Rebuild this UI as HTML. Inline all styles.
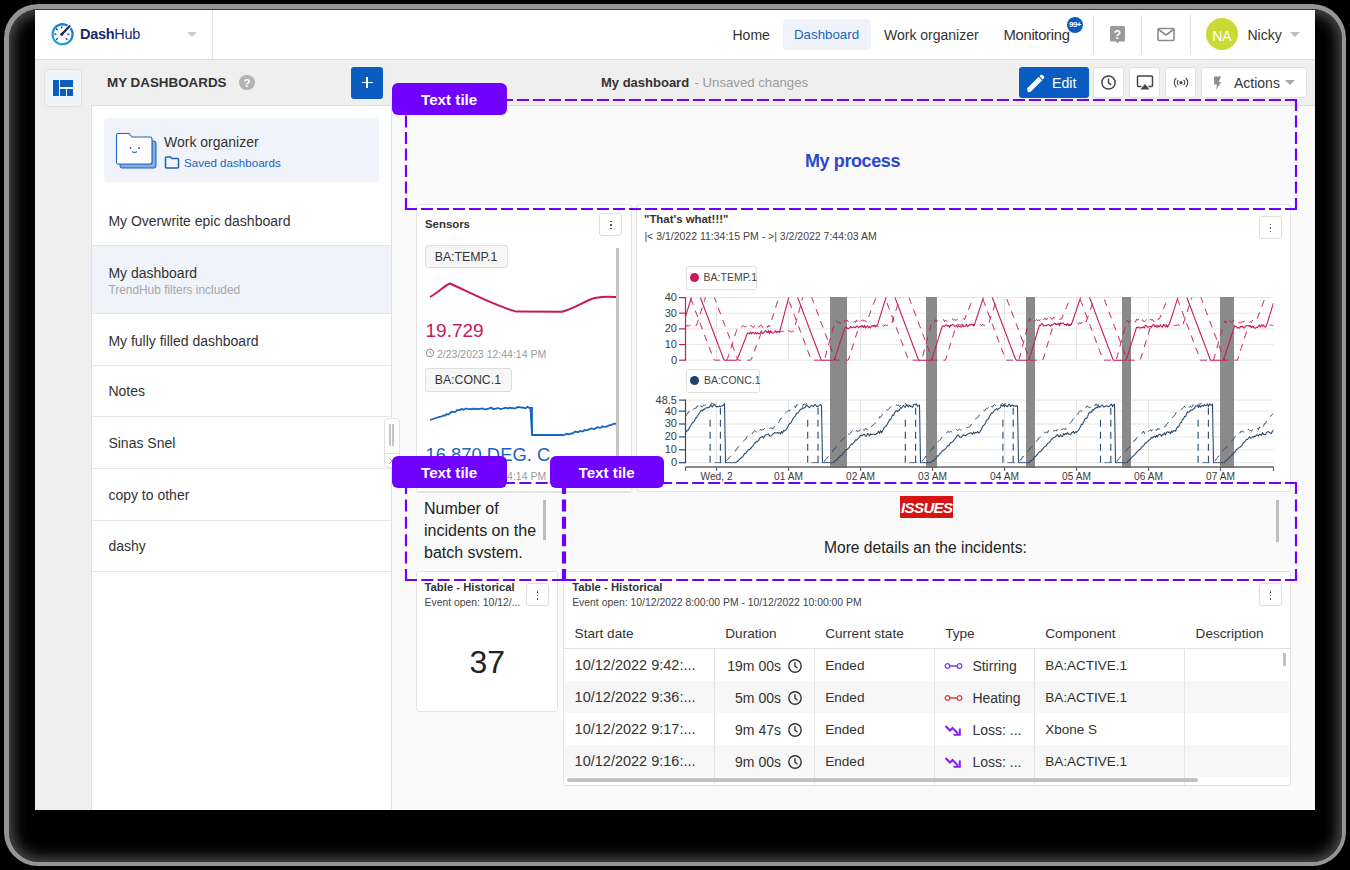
<!DOCTYPE html>
<html><head><meta charset="utf-8">
<style>
*{box-sizing:border-box;margin:0;padding:0}
html,body{width:1350px;height:870px;overflow:hidden;background:#000}
body{position:relative;font-family:"Liberation Sans",sans-serif;color:#333}
.a{position:absolute}
.t{position:absolute;white-space:nowrap;line-height:1}
.r{text-align:right}
.c{text-align:center}
.b{font-weight:bold}
#sh1{left:4px;top:4px;width:1342px;height:862px;border-radius:34px;background:#959595}
#sh2{left:8.5px;top:8.5px;width:1333px;height:853px;border-radius:30px;background:#000;box-shadow:inset 0 0 14px 4px #505050}
#win{left:35px;top:10px;width:1280px;height:800px;background:#fafafa;overflow:hidden}
.card{position:absolute;background:#fff;border:1px solid #e3e3e3;border-radius:3px}
.kb{position:absolute;width:23px;height:23px;border:1px solid #dedede;border-radius:3px;background:#fff}
.kb i{position:absolute;left:10.2px;width:1.7px;height:1.7px;background:#555}
.btn{position:absolute;top:67px;height:31px;background:#fff;border:1px solid #e0e0e0;border-radius:3px}
.sep{position:absolute;height:1px;background:#e6e6e6;left:92px;width:299px}
.lbl{position:absolute;width:115px;height:32px;background:#7000ff;border-radius:6px;color:#fff;font-weight:bold;font-size:15.2px}
.lbl span{position:absolute;left:29px;top:8.7px;line-height:1}
</style></head>
<body>
<div id="sh1" class="a"></div>
<div id="sh2" class="a"></div>
<div id="win" class="a"></div>

<!-- HEADER -->
<div class="a" style="left:35px;top:10px;width:1280px;height:49px;background:#fff"></div>
<div class="a" style="left:35px;top:59px;width:1280px;height:1px;background:#dcdcdc"></div>
<div class="a" style="left:212px;top:10px;width:1px;height:49px;background:#e2e2e2"></div>
<svg class="a" style="left:48px;top:20px" width="28" height="28" viewBox="0 0 28 28">
  <defs><linearGradient id="lg" x1="0" y1="1" x2="1" y2="0"><stop offset="0" stop-color="#22b0e8"/><stop offset="1" stop-color="#1670c8"/></linearGradient></defs>
  <path d="M22.5 8.2 A10 10 0 1 1 19.5 5.6" fill="none" stroke="url(#lg)" stroke-width="2.3"/>
  <path d="M13.8 14.2 L21.5 6.2" stroke="#17286b" stroke-width="2.2" stroke-linecap="round"/>
  <circle cx="13.8" cy="14.2" r="1.5" fill="#17286b"/>
  <g stroke="#17286b" stroke-width="1.3" stroke-linecap="round">
   <line x1="13.8" y1="7" x2="13.8" y2="7.8"/><line x1="8.5" y1="9" x2="9.2" y2="9.7"/>
   <line x1="6.8" y1="14.2" x2="7.8" y2="14.2"/><line x1="19.8" y1="14.2" x2="20.8" y2="14.2"/>
   <line x1="8.6" y1="19.3" x2="9.3" y2="18.6"/><line x1="18.9" y1="19.3" x2="18.2" y2="18.6"/>
  </g>
</svg>
<div class="t" style="left:80px;top:27.3px;font-size:14.5px;color:#17286b;letter-spacing:-0.3px"><b>Dash</b>Hub</div>
<svg class="a" style="left:186px;top:31px" width="12" height="7"><path d="M1 1 L11 1 L6 6 Z" fill="#cacaca"/></svg>

<div class="a" style="left:783px;top:19px;width:88px;height:31px;background:#f0f4fa;border-radius:4px"></div>
<div class="t" style="left:732.5px;top:28px;font-size:14px;color:#333">Home</div>
<div class="t" style="left:794px;top:28px;font-size:13.3px;color:#1a62c0">Dashboard</div>
<div class="t" style="left:884px;top:28px;font-size:14px;color:#333">Work organizer</div>
<div class="t" style="left:1003.5px;top:27.7px;font-size:14.8px;color:#333;letter-spacing:-0.3px">Monitoring</div>
<div class="a" style="left:1067px;top:16.7px;width:16px;height:16px;border-radius:50%;background:#0b5cc0"></div>
<div class="t b c" style="left:1066.5px;top:20.5px;width:17px;font-size:8px;color:#fff;letter-spacing:-0.6px">99+</div>
<div class="a" style="left:1093px;top:15px;width:1px;height:39px;background:#e0e0e0"></div>
<div class="a" style="left:1141px;top:15px;width:1px;height:39px;background:#e0e0e0"></div>
<div class="a" style="left:1190px;top:15px;width:1px;height:39px;background:#e0e0e0"></div>
<svg class="a" style="left:1109px;top:25px" width="17" height="20" viewBox="0 0 17 20">
  <path d="M2.5 1 H14.5 A1.5 1.5 0 0 1 16 2.5 V15 A1.5 1.5 0 0 1 14.5 16.5 H10 L8.5 18.5 L7 16.5 H2.5 A1.5 1.5 0 0 1 1 15 V2.5 A1.5 1.5 0 0 1 2.5 1 Z" fill="#9a9a9a"/>
  <text x="8.5" y="13.5" font-family="Liberation Sans" font-weight="bold" font-size="12" fill="#fff" text-anchor="middle">?</text>
</svg>
<svg class="a" style="left:1157px;top:27px" width="18" height="15" viewBox="0 0 18 15">
  <rect x="1" y="1.5" width="16" height="12" rx="1" fill="none" stroke="#8a8a8a" stroke-width="1.6"/>
  <path d="M1.5 2.5 L9 8 L16.5 2.5" fill="none" stroke="#8a8a8a" stroke-width="1.6"/>
</svg>
<div class="a" style="left:1205.7px;top:17.8px;width:32.5px;height:32.5px;border-radius:50%;background:#cbd935"></div>
<div class="t c" style="left:1205.7px;top:28.5px;width:32.5px;font-size:14px;color:#fff">NA</div>
<div class="t" style="left:1247.5px;top:28px;font-size:14px;color:#333">Nicky</div>
<svg class="a" style="left:1289px;top:31px" width="12" height="7"><path d="M1 1 L11 1 L6 6 Z" fill="#bdbdbd"/></svg>

<!-- RAIL + SIDEBAR -->
<div class="a" style="left:35px;top:60px;width:357px;height:750px;background:#efefef"></div>
<div class="a" style="left:44px;top:69px;width:38px;height:38px;background:#f0f5fa;border:1px solid #e0e0e0;border-radius:4px"></div>
<div class="a" style="left:53px;top:80px;width:6px;height:16px;background:#0b5cc0"></div>
<div class="a" style="left:60px;top:80px;width:13px;height:7px;background:#0b5cc0"></div>
<div class="a" style="left:60px;top:89px;width:6px;height:7px;background:#0b5cc0"></div>
<div class="a" style="left:67px;top:89px;width:6px;height:7px;background:#0b5cc0"></div>

<div class="t b" style="left:107px;top:75.7px;font-size:13.4px;color:#333">MY DASHBOARDS</div>
<div class="a" style="left:239.3px;top:75px;width:15.3px;height:15.3px;border-radius:50%;background:#b3b3b3"></div>
<div class="t b c" style="left:239.3px;top:77.5px;width:15.3px;font-size:11.5px;color:#fff">?</div>
<div class="a" style="left:351px;top:66.5px;width:32px;height:32px;background:#0b5cc0;border-radius:3px"></div>
<div class="a" style="left:361.5px;top:81.8px;width:11px;height:1.6px;background:#fff"></div>
<div class="a" style="left:366.2px;top:77px;width:1.6px;height:11px;background:#fff"></div>

<div class="a" style="left:91px;top:105px;width:301px;height:705px;background:#fff;border:1px solid #e0e0e0;border-bottom:none"></div>
<div class="a" style="left:104px;top:118px;width:275px;height:64px;background:#f0f4fa;border-radius:4px"></div>
<svg class="a" style="left:114px;top:132.3px" width="44" height="38" viewBox="0 0 44 38">
  <path d="M6 9 H40 A2 2 0 0 1 42 11 V34 A2 2 0 0 1 40 36 H8 A2 2 0 0 1 6 34 Z" fill="#86a9dc" stroke="#1a62c0" stroke-width="1"/>
  <path d="M2.5 3 A1.5 1.5 0 0 1 4 1.5 H15 L18 5 H36 A2 2 0 0 1 38 7 V30 A2 2 0 0 1 36 32 H4 A1.5 1.5 0 0 1 2.5 30.5 Z" fill="#fff" stroke="#1a62c0" stroke-width="1.1"/>
  <circle cx="16.5" cy="16" r="0.9" fill="#1a62c0"/><circle cx="25" cy="16" r="0.9" fill="#1a62c0"/>
  <path d="M18 19.5 Q20.5 21.5 23 19.5" fill="none" stroke="#1a62c0" stroke-width="1.1"/>
</svg>
<div class="t" style="left:164px;top:135.3px;font-size:14px;color:#333">Work organizer</div>
<svg class="a" style="left:164px;top:156px" width="16" height="13" viewBox="0 0 16 13">
  <path d="M1.5 2 A1 1 0 0 1 2.5 1 H6.5 L8 2.5 H13.5 A1 1 0 0 1 14.5 3.5 V11 A1 1 0 0 1 13.5 12 H2.5 A1 1 0 0 1 1.5 11 Z" fill="none" stroke="#1a62c0" stroke-width="1.5"/>
</svg>
<div class="t" style="left:184px;top:156.5px;font-size:11.6px;color:#1a62c0">Saved dashboards</div>

<div class="t" style="left:108.4px;top:214px;font-size:14px;color:#333">My Overwrite epic dashboard</div>
<div class="sep" style="top:244.5px"></div>
<div class="a" style="left:92px;top:245.5px;width:299px;height:68px;background:#f0f4fa"></div>
<div class="t" style="left:108.4px;top:265.7px;font-size:14px;color:#333">My dashboard</div>
<div class="t" style="left:108.4px;top:284.5px;font-size:11.9px;color:#a6a6a6">TrendHub filters included</div>
<div class="sep" style="top:313px"></div>
<div class="t" style="left:108.4px;top:333.7px;font-size:14px;color:#333">My fully filled dashboard</div>
<div class="sep" style="top:364.7px"></div>
<div class="t" style="left:108.4px;top:384.3px;font-size:14px;color:#333">Notes</div>
<div class="sep" style="top:416.3px"></div>
<div class="t" style="left:108.4px;top:436.3px;font-size:14px;color:#333">Sinas Snel</div>
<div class="sep" style="top:468px"></div>
<div class="t" style="left:108.4px;top:488.1px;font-size:14px;color:#333">copy to other</div>
<div class="sep" style="top:519.7px"></div>
<div class="t" style="left:108.4px;top:539.4px;font-size:14px;color:#333">dashy</div>
<div class="sep" style="top:571.4px"></div>

<div class="a" style="left:384px;top:417.5px;width:15.5px;height:50.5px;background:#fff;border:1px solid #e2e2e2;border-radius:4px"></div>
<div class="a" style="left:389px;top:424px;width:1.8px;height:22px;background:#c4c4c4"></div>
<div class="a" style="left:392.3px;top:424px;width:1.8px;height:22px;background:#c4c4c4"></div>
<div class="a" style="left:384.5px;top:453px;width:14.5px;height:1px;background:#e2e2e2"></div>
<svg class="a" style="left:388px;top:457px" width="8" height="8"><path d="M1 1 L7 7 M7 1 L1 7" stroke="#aaa" stroke-width="1"/></svg>

<!-- TOOLBAR -->
<div class="a" style="left:392px;top:60px;width:923px;height:45px;background:#efefef"></div>
<div class="a" style="left:392px;top:105px;width:923px;height:1px;background:#dedede"></div>
<div class="t b" style="left:601px;top:75.5px;font-size:13px;color:#333">My dashboard</div>
<div class="t" style="left:694.5px;top:75.5px;font-size:13.2px;color:#9a9a9a">- Unsaved changes</div>

<div class="a" style="left:1018.5px;top:66.5px;width:70px;height:31.5px;background:#0b5cc0;border-radius:3px"></div>
<svg class="a" style="left:1025px;top:73px" width="21" height="21" viewBox="0 0 21 21">
  <path d="M3.2 18.8 L2.6 15.3 L13.6 4.3 L16.7 7.4 L5.7 18.4 Z" fill="#fff" stroke="#fff" stroke-width="1" stroke-linejoin="round"/>
  <path d="M14.6 3.3 L15.8 2.1 A1.2 1.2 0 0 1 17.5 2.1 L18.9 3.5 A1.2 1.2 0 0 1 18.9 5.2 L17.7 6.4 Z" fill="#fff"/>
</svg>
<div class="t" style="left:1052px;top:76.2px;font-size:14.2px;color:#fff">Edit</div>
<div class="btn" style="left:1093px;width:31px"></div>
<svg class="a" style="left:1100px;top:74px" width="17" height="17" viewBox="0 0 17 17">
  <circle cx="8.5" cy="8.5" r="6.6" fill="none" stroke="#444" stroke-width="1.5"/>
  <path d="M8.5 4.6 V8.7 L11.2 10.8" fill="none" stroke="#444" stroke-width="1.5"/>
</svg>
<div class="btn" style="left:1129px;width:31px"></div>
<svg class="a" style="left:1136px;top:74px" width="18" height="17" viewBox="0 0 18 17">
  <path d="M5.5 12.5 H2.5 A1 1 0 0 1 1.5 11.5 V3 A1 1 0 0 1 2.5 2 H15.5 A1 1 0 0 1 16.5 3 V11.5 A1 1 0 0 1 15.5 12.5 H12.5" fill="none" stroke="#444" stroke-width="1.5"/>
  <path d="M4.5 15.5 L9 10 L13.5 15.5 Z" fill="#444"/>
</svg>
<div class="btn" style="left:1165px;width:31px"></div>
<svg class="a" style="left:1173px;top:77px" width="16" height="11" viewBox="0 0 16 11">
  <circle cx="8" cy="5.5" r="1.6" fill="#444"/>
  <path d="M5.4 3 A3.4 3.4 0 0 0 5.4 8 M10.6 3 A3.4 3.4 0 0 1 10.6 8" fill="none" stroke="#444" stroke-width="1.1"/>
  <path d="M3.3 1 A6 6 0 0 0 3.3 10 M12.7 1 A6 6 0 0 1 12.7 10" fill="none" stroke="#444" stroke-width="1.1"/>
</svg>
<div class="btn" style="left:1201px;width:105.5px"></div>
<svg class="a" style="left:1211px;top:74px" width="13" height="18" viewBox="0 0 13 18">
  <path d="M3 2.6 L10 2.6 L7.6 8 L10.2 8 L5 15.8 L6 10.6 L3.2 10.6 Z" fill="#8c8c8c"/>
</svg>
<div class="t" style="left:1234px;top:75.5px;font-size:14px;color:#333">Actions</div>
<svg class="a" style="left:1283.5px;top:79px" width="12" height="7"><path d="M1 1 L11 1 L6 6 Z" fill="#a8a8a8"/></svg>

<!-- CARDS -->
<div class="card" style="left:416px;top:203.5px;width:216px;height:288px"></div>
<div class="card" style="left:636px;top:203.5px;width:655px;height:288px"></div>
<div class="card" style="left:416px;top:571px;width:142px;height:141px"></div>
<div class="card" style="left:563px;top:571px;width:728px;height:214.5px"></div>

<!-- Sensors content -->
<div class="t b" style="left:425px;top:218.8px;font-size:11.4px;color:#333">Sensors</div>
<div class="kb" style="left:599px;top:212.5px"><i style="top:7px"></i><i style="top:10.5px"></i><i style="top:14px"></i></div>
<div class="a" style="left:425px;top:244.7px;width:83px;height:23px;background:#f6f6f6;border:1px solid #dedede;border-radius:3px"></div>
<div class="t" style="left:434.7px;top:250.5px;font-size:12.3px;color:#333">BA:TEMP.1</div>
<div class="t" style="left:425.5px;top:321px;font-size:19px;color:#c8185e">19.729</div>
<svg class="a" style="left:425px;top:348px" width="10" height="10" viewBox="0 0 10 10"><circle cx="5" cy="5" r="3.6" fill="none" stroke="#999" stroke-width="1.1"/><path d="M5 3 V5.2 L6.5 6.3" fill="none" stroke="#999" stroke-width="1"/></svg>
<div class="t" style="left:437px;top:348.5px;font-size:10.5px;color:#9a9a9a">2/23/2023 12:44:14 PM</div>
<div class="a" style="left:425px;top:368.3px;width:87px;height:23.4px;background:#f6f6f6;border:1px solid #dedede;border-radius:3px"></div>
<div class="t" style="left:434.7px;top:374px;font-size:12.3px;color:#333">BA:CONC.1</div>
<svg class="a" style="left:0;top:0" width="1350" height="870" viewBox="0 0 1350 870">
<path d="M430,297 C438,292.5 444,286 450,283.5 C466,290.5 496,306.5 516.5,311.6 L562,311.7 C576,308 585,300.5 595,298 C604,296.3 610,296.8 616,297" fill="none" stroke="#c8185e" stroke-width="2" stroke-linejoin="round"/>
<path d="M430.0,420.0 L431.5,419.5 L433.0,419.0 L434.5,418.5 L436.0,418.0 L437.5,417.5 L439.0,417.0 L440.5,416.7 L442.0,416.3 L443.5,415.4 L445.0,415.6 L446.5,414.0 L448.0,414.7 L449.5,413.8 L451.0,412.1 L452.5,411.6 L454.0,412.1 L455.5,411.9 L457.0,410.2 L458.5,410.1 L460.0,410.2 L461.5,408.8 L463.0,409.8 L464.5,409.2 L466.0,408.5 L467.5,408.9 L469.0,409.2 L470.5,409.0 L472.0,409.3 L473.5,408.4 L475.0,409.4 L476.5,408.7 L478.0,409.1 L479.5,409.0 L481.0,408.6 L482.5,408.5 L484.0,409.1 L485.5,409.3 L487.0,409.0 L488.5,408.6 L490.0,408.2 L491.5,407.7 L493.0,409.2 L494.5,408.7 L496.0,408.8 L497.5,408.0 L499.0,408.4 L500.5,409.0 L502.0,408.7 L503.5,408.3 L505.0,407.8 L506.5,407.9 L508.0,408.6 L509.5,407.7 L511.0,408.2 L512.5,408.0 L514.0,408.4 L515.5,408.3 L517.0,407.4 L518.5,406.9 L520.0,407.3 L521.5,407.5 L523.0,407.7 L524.5,408.0 L526.0,408.1 L527.5,406.7 L529.0,407.9 L530.5,407.8 L532.0,435.0 L533.5,435.0 L535.0,435.0 L536.5,435.0 L538.0,435.0 L539.5,435.0 L541.0,435.0 L542.5,435.0 L544.0,435.0 L545.5,435.0 L547.0,435.0 L548.5,435.0 L550.0,435.0 L551.5,435.0 L553.0,435.0 L554.5,435.0 L556.0,435.0 L557.5,435.0 L559.0,435.0 L560.5,435.0 L562.0,435.0 L563.5,435.3 L565.0,434.5 L566.5,433.7 L568.0,434.3 L569.5,434.0 L571.0,433.5 L572.5,433.5 L574.0,432.3 L575.5,431.6 L577.0,432.0 L578.5,432.1 L580.0,430.9 L581.5,431.4 L583.0,431.4 L584.5,430.0 L586.0,430.3 L587.5,430.1 L589.0,429.4 L590.5,428.7 L592.0,428.5 L593.5,429.0 L595.0,428.7 L596.5,427.9 L598.0,427.0 L599.5,427.9 L601.0,427.5 L602.5,426.3 L604.0,426.6 L605.5,426.8 L607.0,426.4 L608.5,425.6 L610.0,425.2 L611.5,425.1 L613.0,424.1 L614.5,423.8 L616.0,423.5" fill="none" stroke="#1a62c0" stroke-width="1.8" stroke-linejoin="round"/>
<line x1="532" y1="407" x2="532" y2="435" stroke="#1a62c0" stroke-width="1.8"/>
</svg>
<div class="t" style="left:425.5px;top:446.3px;font-size:18.4px;color:#1a62c0">16.870 DEG. C</div>
<div class="t" style="left:437px;top:471px;font-size:10.5px;color:#9a9a9a">2/23/2023 12:44:14 PM</div>
<div class="a" style="left:416px;top:491.5px;width:216px;height:1px;background:#e3e3e3"></div>
<div class="a" style="left:616px;top:248px;width:3px;height:208px;background:#c4c4c4"></div>

<!-- Chart content -->
<div class="t b" style="left:644px;top:214.3px;font-size:11.4px;color:#333">"That's what!!!"</div>
<div class="t" style="left:644.4px;top:231px;font-size:10.5px;color:#444">|&lt; 3/1/2022 11:34:15 PM - &gt;| 3/2/2022 7:44:03 AM</div>
<div class="kb" style="left:1258.5px;top:215.5px"><i style="top:7px"></i><i style="top:10.5px"></i><i style="top:14px"></i></div>
<div class="a" style="left:685.5px;top:265.5px;width:71.5px;height:24px;background:#fff;border:1px solid #e0e0e0;border-radius:3px"></div>
<div class="a" style="left:689.7px;top:272.6px;width:9.4px;height:9.4px;border-radius:50%;background:#c8185e"></div>
<div class="t" style="left:703.6px;top:272.3px;font-size:10.5px;color:#444">BA:TEMP.1</div>
<div class="a" style="left:685.5px;top:369px;width:74.5px;height:23.5px;background:#fff;border:1px solid #e0e0e0;border-radius:3px"></div>
<div class="a" style="left:689.8px;top:375.7px;width:9.4px;height:9.4px;border-radius:50%;background:#234468"></div>
<div class="t" style="left:703.9px;top:375.3px;font-size:10.5px;color:#444">BA:CONC.1</div>
<svg class="a" style="left:0;top:0" width="1350" height="870" viewBox="0 0 1350 870">
<line x1="685.5" x2="1273.5" y1="360.2" y2="360.2" stroke="#e6e6e6" stroke-width="1"/>
<line x1="685.5" x2="1273.5" y1="344.6" y2="344.6" stroke="#e6e6e6" stroke-width="1"/>
<line x1="685.5" x2="1273.5" y1="328.9" y2="328.9" stroke="#e6e6e6" stroke-width="1"/>
<line x1="685.5" x2="1273.5" y1="313.2" y2="313.2" stroke="#e6e6e6" stroke-width="1"/>
<line x1="685.5" x2="1273.5" y1="297.6" y2="297.6" stroke="#e6e6e6" stroke-width="1"/>
<line x1="685.5" x2="1273.5" y1="462.7" y2="462.7" stroke="#e6e6e6" stroke-width="1"/>
<line x1="685.5" x2="1273.5" y1="449.8" y2="449.8" stroke="#e6e6e6" stroke-width="1"/>
<line x1="685.5" x2="1273.5" y1="436.9" y2="436.9" stroke="#e6e6e6" stroke-width="1"/>
<line x1="685.5" x2="1273.5" y1="424.0" y2="424.0" stroke="#e6e6e6" stroke-width="1"/>
<line x1="685.5" x2="1273.5" y1="411.1" y2="411.1" stroke="#e6e6e6" stroke-width="1"/>
<line x1="685.5" x2="1273.5" y1="400.1" y2="400.1" stroke="#e6e6e6" stroke-width="1"/>
<line x1="716.5" x2="716.5" y1="297.6" y2="360.2" stroke="#e6e6e6" stroke-width="1"/>
<line x1="716.5" x2="716.5" y1="400" y2="462.7" stroke="#e6e6e6" stroke-width="1"/>
<line x1="788.5" x2="788.5" y1="297.6" y2="360.2" stroke="#e6e6e6" stroke-width="1"/>
<line x1="788.5" x2="788.5" y1="400" y2="462.7" stroke="#e6e6e6" stroke-width="1"/>
<line x1="860.5" x2="860.5" y1="297.6" y2="360.2" stroke="#e6e6e6" stroke-width="1"/>
<line x1="860.5" x2="860.5" y1="400" y2="462.7" stroke="#e6e6e6" stroke-width="1"/>
<line x1="932.5" x2="932.5" y1="297.6" y2="360.2" stroke="#e6e6e6" stroke-width="1"/>
<line x1="932.5" x2="932.5" y1="400" y2="462.7" stroke="#e6e6e6" stroke-width="1"/>
<line x1="1004.5" x2="1004.5" y1="297.6" y2="360.2" stroke="#e6e6e6" stroke-width="1"/>
<line x1="1004.5" x2="1004.5" y1="400" y2="462.7" stroke="#e6e6e6" stroke-width="1"/>
<line x1="1076.5" x2="1076.5" y1="297.6" y2="360.2" stroke="#e6e6e6" stroke-width="1"/>
<line x1="1076.5" x2="1076.5" y1="400" y2="462.7" stroke="#e6e6e6" stroke-width="1"/>
<line x1="1148.5" x2="1148.5" y1="297.6" y2="360.2" stroke="#e6e6e6" stroke-width="1"/>
<line x1="1148.5" x2="1148.5" y1="400" y2="462.7" stroke="#e6e6e6" stroke-width="1"/>
<line x1="1220.5" x2="1220.5" y1="297.6" y2="360.2" stroke="#e6e6e6" stroke-width="1"/>
<line x1="1220.5" x2="1220.5" y1="400" y2="462.7" stroke="#e6e6e6" stroke-width="1"/>
<rect x="830" y="297" width="17" height="171" fill="#8a8a8a"/>
<rect x="926" y="297" width="11" height="171" fill="#8a8a8a"/>
<rect x="1026" y="297" width="9" height="171" fill="#8a8a8a"/>
<rect x="1122" y="297" width="9" height="171" fill="#8a8a8a"/>
<rect x="1220" y="297" width="14" height="171" fill="#8a8a8a"/>
<defs><clipPath id="cpt"><rect x="685.5" y="297.6" width="588" height="63.6"/></clipPath><clipPath id="cpb"><rect x="685.5" y="399" width="588" height="64.5"/></clipPath></defs>
<g clip-path="url(#cpt)" fill="none" stroke-linejoin="round">
<path d="M685.5,286.7 L686.5,287.2 L687.5,289.9 L688.5,292.5 L689.5,295.2 L690.5,297.9 L691.5,300.5 L692.5,303.2 L693.5,305.8 L694.5,308.5 L695.5,311.1 L696.5,313.8 L697.5,316.4 L698.5,319.1 L699.5,321.7 L700.5,324.4 L701.5,327.0 L702.5,329.7 L703.5,332.3 L704.5,335.0 L705.5,337.7 L706.5,340.3 L707.5,343.0 L708.5,345.6 L709.5,348.3 L710.5,350.9 L711.5,353.6 L712.5,356.2 L713.5,358.9 L714.5,360.2 L715.5,360.2 L716.5,360.2 L717.5,360.2 L718.5,360.2 L719.5,360.2 L720.5,360.2 L721.5,360.2 L722.5,360.2 L723.5,360.2 L724.5,360.2 L725.5,360.2 L726.5,360.2 L727.5,358.6 L728.5,355.5 L729.5,352.4 L730.5,349.3 L731.5,346.2 L732.5,343.1 L733.5,340.0 L734.5,336.8 L735.5,333.7 L736.5,330.6 L737.5,327.5 L738.5,328.0 L739.5,328.1 L740.5,328.0 L741.5,326.7 L742.5,325.8 L743.5,325.9 L744.5,327.0 L745.5,326.5 L746.5,326.0 L747.5,328.2 L748.5,326.3 L749.5,325.5 L750.5,325.9 L751.5,326.0 L752.5,326.8 L753.5,327.7 L754.5,325.7 L755.5,327.1 L756.5,325.6 L757.5,325.1 L758.5,326.9 L759.5,326.8 L760.5,325.1 L761.5,325.7 L762.5,327.4 L763.5,327.5 L764.5,327.4 L765.5,325.0 L766.5,325.3 L767.5,327.4 L768.5,325.2 L769.5,326.9 L770.5,323.7 L771.5,320.5 L772.5,317.3 L773.5,314.1 L774.5,311.0 L775.5,307.8 L776.5,304.6 L777.5,301.4 L778.5,298.2 L779.5,295.5 L780.5,292.8 L781.5,290.2 L782.5,287.5 L783.5,286.4 L784.5,289.1 L785.5,291.7 L786.5,294.4 L787.5,297.1 L788.5,299.7 L789.5,302.4 L790.5,305.0 L791.5,307.7 L792.5,310.3 L793.5,313.0 L794.5,315.6 L795.5,318.3 L796.5,320.9 L797.5,323.6 L798.5,326.2 L799.5,328.9 L800.5,331.6 L801.5,334.2 L802.5,336.9 L803.5,339.5 L804.5,342.2 L805.5,344.8 L806.5,347.5 L807.5,350.1 L808.5,352.8 L809.5,355.4 L810.5,358.1 L811.5,360.2 L812.5,360.2 L813.5,360.2 L814.5,360.2 L815.5,360.2 L816.5,360.2 L817.5,360.2 L818.5,360.2 L819.5,360.2 L820.5,360.2 L821.5,360.2 L822.5,360.2 L823.5,360.2 L824.5,359.5 L825.5,355.9 L826.5,352.2 L827.5,348.6 L828.5,345.0 L829.5,341.4 L830.5,337.8 L831.5,334.2 L832.5,330.5 L833.5,326.9 L834.5,323.3 L835.5,320.3 L836.5,321.3 L837.5,322.2 L838.5,321.6 L839.5,322.9 L840.5,323.2 L841.5,320.2 L842.5,321.2 L843.5,321.5 L844.5,320.2 L845.5,321.7 L846.5,320.3 L847.5,320.4 L848.5,322.3 L849.5,322.2 L850.5,322.0 L851.5,322.2 L852.5,321.0 L853.5,322.0 L854.5,321.5 L855.5,322.4 L856.5,319.9 L857.5,321.6 L858.5,321.2 L859.5,320.8 L860.5,319.8 L861.5,321.3 L862.5,319.7 L863.5,321.0 L864.5,320.8 L865.5,320.8 L866.5,322.4 L867.5,319.8 L868.5,317.2 L869.5,314.6 L870.5,311.9 L871.5,309.3 L872.5,306.7 L873.5,304.1 L874.5,301.5 L875.5,298.9 L876.5,296.3 L877.5,293.6 L878.5,290.9 L879.5,288.3 L880.5,285.6 L881.5,288.3 L882.5,290.9 L883.5,293.6 L884.5,296.3 L885.5,298.9 L886.5,301.6 L887.5,304.2 L888.5,306.9 L889.5,309.5 L890.5,312.2 L891.5,314.8 L892.5,317.5 L893.5,320.1 L894.5,322.8 L895.5,325.5 L896.5,328.1 L897.5,330.8 L898.5,333.4 L899.5,336.1 L900.5,338.7 L901.5,341.4 L902.5,344.0 L903.5,346.7 L904.5,349.3 L905.5,352.0 L906.5,354.6 L907.5,357.3 L908.5,359.9 L909.5,360.2 L910.5,360.2 L911.5,360.2 L912.5,360.2 L913.5,360.2 L914.5,360.2 L915.5,360.2 L916.5,360.2 L917.5,360.2 L918.5,360.2 L919.5,360.2 L920.5,360.2 L921.5,360.2 L922.5,356.9 L923.5,353.1 L924.5,349.4 L925.5,345.7 L926.5,342.0 L927.5,338.2 L928.5,334.5 L929.5,330.8 L930.5,327.1 L931.5,323.4 L932.5,320.9 L933.5,321.7 L934.5,322.2 L935.5,319.7 L936.5,321.7 L937.5,320.7 L938.5,319.9 L939.5,320.4 L940.5,321.0 L941.5,320.4 L942.5,320.3 L943.5,319.5 L944.5,321.6 L945.5,320.2 L946.5,321.1 L947.5,321.0 L948.5,319.4 L949.5,320.2 L950.5,320.0 L951.5,319.3 L952.5,318.8 L953.5,320.3 L954.5,319.7 L955.5,320.0 L956.5,320.0 L957.5,319.4 L958.5,320.1 L959.5,319.8 L960.5,319.9 L961.5,318.5 L962.5,319.2 L963.5,318.6 L964.5,319.5 L965.5,317.0 L966.5,314.5 L967.5,312.0 L968.5,309.6 L969.5,307.1 L970.5,304.6 L971.5,302.1 L972.5,299.6 L973.5,297.1 L974.5,294.4 L975.5,291.7 L976.5,289.1 L977.5,286.4 L978.5,287.5 L979.5,290.2 L980.5,292.8 L981.5,295.5 L982.5,298.1 L983.5,300.8 L984.5,303.4 L985.5,306.1 L986.5,308.7 L987.5,311.4 L988.5,314.0 L989.5,316.7 L990.5,319.4 L991.5,322.0 L992.5,324.7 L993.5,327.3 L994.5,330.0 L995.5,332.6 L996.5,335.3 L997.5,337.9 L998.5,340.6 L999.5,343.2 L1000.5,345.9 L1001.5,348.5 L1002.5,351.2 L1003.5,353.8 L1004.5,356.5 L1005.5,359.1 L1006.5,360.2 L1007.5,360.2 L1008.5,360.2 L1009.5,360.2 L1010.5,360.2 L1011.5,360.2 L1012.5,360.2 L1013.5,360.2 L1014.5,360.2 L1015.5,360.2 L1016.5,360.2 L1017.5,360.2 L1018.5,360.2 L1019.5,357.9 L1020.5,354.1 L1021.5,350.2 L1022.5,346.4 L1023.5,342.5 L1024.5,338.7 L1025.5,334.9 L1026.5,331.0 L1027.5,327.2 L1028.5,323.3 L1029.5,318.1 L1030.5,320.2 L1031.5,319.3 L1032.5,318.0 L1033.5,318.3 L1034.5,320.5 L1035.5,320.5 L1036.5,319.5 L1037.5,320.6 L1038.5,320.0 L1039.5,320.5 L1040.5,318.6 L1041.5,318.2 L1042.5,317.9 L1043.5,320.2 L1044.5,318.4 L1045.5,318.5 L1046.5,320.1 L1047.5,317.7 L1048.5,317.5 L1049.5,319.8 L1050.5,317.4 L1051.5,319.1 L1052.5,318.8 L1053.5,317.2 L1054.5,317.7 L1055.5,319.8 L1056.5,318.9 L1057.5,318.6 L1058.5,319.1 L1059.5,319.5 L1060.5,319.1 L1061.5,319.0 L1062.5,316.7 L1063.5,314.3 L1064.5,312.0 L1065.5,309.6 L1066.5,307.3 L1067.5,304.9 L1068.5,302.5 L1069.5,300.2 L1070.5,297.8 L1071.5,295.2 L1072.5,292.5 L1073.5,289.9 L1074.5,287.2 L1075.5,286.7 L1076.5,289.4 L1077.5,292.0 L1078.5,294.7 L1079.5,297.3 L1080.5,300.0 L1081.5,302.6 L1082.5,305.3 L1083.5,307.9 L1084.5,310.6 L1085.5,313.3 L1086.5,315.9 L1087.5,318.6 L1088.5,321.2 L1089.5,323.9 L1090.5,326.5 L1091.5,329.2 L1092.5,331.8 L1093.5,334.5 L1094.5,337.1 L1095.5,339.8 L1096.5,342.4 L1097.5,345.1 L1098.5,347.7 L1099.5,350.4 L1100.5,353.0 L1101.5,355.7 L1102.5,358.3 L1103.5,360.2 L1104.5,360.2 L1105.5,360.2 L1106.5,360.2 L1107.5,360.2 L1108.5,360.2 L1109.5,360.2 L1110.5,360.2 L1111.5,360.2 L1112.5,360.2 L1113.5,360.2 L1114.5,360.2 L1115.5,360.2 L1116.5,359.1 L1117.5,355.4 L1118.5,351.7 L1119.5,348.0 L1120.5,344.3 L1121.5,340.6 L1122.5,336.9 L1123.5,333.3 L1124.5,329.6 L1125.5,325.9 L1126.5,322.2 L1127.5,320.4 L1128.5,322.5 L1129.5,320.8 L1130.5,321.1 L1131.5,322.4 L1132.5,321.4 L1133.5,320.5 L1134.5,320.8 L1135.5,322.2 L1136.5,319.3 L1137.5,319.8 L1138.5,319.2 L1139.5,321.9 L1140.5,321.4 L1141.5,322.1 L1142.5,319.7 L1143.5,321.3 L1144.5,321.7 L1145.5,320.7 L1146.5,319.2 L1147.5,319.4 L1148.5,321.2 L1149.5,321.5 L1150.5,319.0 L1151.5,320.1 L1152.5,319.6 L1153.5,321.5 L1154.5,321.6 L1155.5,319.6 L1156.5,320.4 L1157.5,321.5 L1158.5,318.7 L1159.5,318.8 L1160.5,316.3 L1161.5,313.8 L1162.5,311.2 L1163.5,308.7 L1164.5,306.2 L1165.5,303.7 L1166.5,301.1 L1167.5,298.6 L1168.5,296.0 L1169.5,293.3 L1170.5,290.7 L1171.5,288.0 L1172.5,285.9 L1173.5,288.6 L1174.5,291.2 L1175.5,293.9 L1176.5,296.5 L1177.5,299.2 L1178.5,301.8 L1179.5,304.5 L1180.5,307.1 L1181.5,309.8 L1182.5,312.5 L1183.5,315.1 L1184.5,317.8 L1185.5,320.4 L1186.5,323.1 L1187.5,325.7 L1188.5,328.4 L1189.5,331.0 L1190.5,333.7 L1191.5,336.3 L1192.5,339.0 L1193.5,341.6 L1194.5,344.3 L1195.5,346.9 L1196.5,349.6 L1197.5,352.2 L1198.5,354.9 L1199.5,357.5 L1200.5,360.2 L1201.5,360.2 L1202.5,360.2 L1203.5,360.2 L1204.5,360.2 L1205.5,360.2 L1206.5,360.2 L1207.5,360.2 L1208.5,360.2 L1209.5,360.2 L1210.5,360.2 L1211.5,360.2 L1212.5,360.2 L1213.5,360.2 L1214.5,356.6 L1215.5,353.0 L1216.5,349.3 L1217.5,345.7 L1218.5,342.1 L1219.5,338.5 L1220.5,334.9 L1221.5,331.3 L1222.5,327.6 L1223.5,324.0 L1224.5,321.4 L1225.5,320.9 L1226.5,323.1 L1227.5,320.6 L1228.5,323.1 L1229.5,320.6 L1230.5,321.8 L1231.5,322.1 L1232.5,321.4 L1233.5,320.2 L1234.5,322.3 L1235.5,322.7 L1236.5,321.4 L1237.5,322.3 L1238.5,322.6 L1239.5,322.4 L1240.5,322.8 L1241.5,322.2 L1242.5,321.9 L1243.5,321.9 L1244.5,320.4 L1245.5,321.8 L1246.5,321.2 L1247.5,322.1 L1248.5,321.6 L1249.5,322.6 L1250.5,321.8 L1251.5,322.5 L1252.5,320.2 L1253.5,320.8 L1254.5,321.9 L1255.5,321.0 L1256.5,320.3 L1257.5,317.7 L1258.5,315.1 L1259.5,312.5 L1260.5,309.9 L1261.5,307.3 L1262.5,304.6 L1263.5,302.0 L1264.5,299.4 L1265.5,296.8 L1266.5,294.1 L1267.5,291.5 L1268.5,288.8 L1269.5,286.2 L1270.5,287.8 L1271.5,290.4 L1272.5,293.1 L1273.5,295.7" stroke="#c8185e" stroke-width="1" stroke-dasharray="7 6"/>
<path d="M685.5,325.1 L686.5,326.6 L687.5,325.2 L688.5,325.9 L689.5,325.8 L690.5,325.1 L691.5,325.9 L692.5,325.7 L693.5,325.3 L694.5,324.7 L695.5,325.9 L696.5,325.3 L697.5,322.2 L698.5,319.1 L699.5,316.0 L700.5,312.9 L701.5,309.7 L702.5,306.6 L703.5,303.5 L704.5,300.4 L705.5,297.3 L706.5,294.7 L707.5,292.0 L708.5,289.4 L709.5,286.7 L710.5,287.2 L711.5,289.9 L712.5,292.5 L713.5,295.2 L714.5,297.9 L715.5,300.5 L716.5,303.2 L717.5,305.8 L718.5,308.5 L719.5,311.1 L720.5,313.8 L721.5,316.4 L722.5,319.1 L723.5,321.7 L724.5,324.4 L725.5,327.0 L726.5,329.7 L727.5,332.3 L728.5,335.0 L729.5,337.7 L730.5,340.3 L731.5,343.0 L732.5,345.6 L733.5,348.3 L734.5,350.9 L735.5,353.6 L736.5,356.2 L737.5,358.9 L738.5,360.2 L739.5,360.2 L740.5,360.2 L741.5,360.2 L742.5,360.2 L743.5,360.2 L744.5,360.2 L745.5,360.2 L746.5,360.2 L747.5,360.2 L748.5,360.2 L749.5,360.2 L750.5,360.2 L751.5,358.9 L752.5,356.2 L753.5,353.5 L754.5,350.8 L755.5,348.2 L756.5,345.5 L757.5,342.8 L758.5,340.2 L759.5,337.5 L760.5,334.8 L761.5,332.1 L762.5,331.2 L763.5,331.4 L764.5,331.5 L765.5,331.9 L766.5,332.0 L767.5,332.5 L768.5,332.4 L769.5,332.4 L770.5,331.1 L771.5,332.0 L772.5,332.2 L773.5,332.3 L774.5,330.8 L775.5,330.7 L776.5,331.1 L777.5,331.8 L778.5,331.8 L779.5,331.7 L780.5,331.4 L781.5,331.9 L782.5,331.3 L783.5,331.6 L784.5,330.3 L785.5,330.2 L786.5,331.0 L787.5,331.5 L788.5,330.2 L789.5,331.4 L790.5,331.2 L791.5,331.9 L792.5,331.1 L793.5,331.5 L794.5,327.8 L795.5,324.1 L796.5,320.4 L797.5,316.8 L798.5,313.1 L799.5,309.4 L800.5,305.7 L801.5,302.0 L802.5,298.3 L803.5,295.5 L804.5,292.8 L805.5,290.2 L806.5,287.5 L807.5,286.4 L808.5,289.1 L809.5,291.7 L810.5,294.4 L811.5,297.1 L812.5,299.7 L813.5,302.4 L814.5,305.0 L815.5,307.7 L816.5,310.3 L817.5,313.0 L818.5,315.6 L819.5,318.3 L820.5,320.9 L821.5,323.6 L822.5,326.2 L823.5,328.9 L824.5,331.6 L825.5,334.2 L826.5,336.9 L827.5,339.5 L828.5,342.2 L829.5,344.8 L830.5,347.5 L831.5,350.1 L832.5,352.8 L833.5,355.4 L834.5,358.1 L835.5,360.2 L836.5,360.2 L837.5,360.2 L838.5,360.2 L839.5,360.2 L840.5,360.2 L841.5,360.2 L842.5,360.2 L843.5,360.2 L844.5,360.2 L845.5,360.2 L846.5,360.2 L847.5,360.2 L848.5,359.6 L849.5,356.4 L850.5,353.2 L851.5,350.0 L852.5,346.9 L853.5,343.7 L854.5,340.5 L855.5,337.3 L856.5,334.2 L857.5,331.0 L858.5,327.8 L859.5,326.6 L860.5,326.5 L861.5,327.0 L862.5,326.4 L863.5,327.3 L864.5,326.8 L865.5,327.1 L866.5,326.5 L867.5,327.1 L868.5,327.1 L869.5,326.6 L870.5,326.7 L871.5,326.0 L872.5,326.1 L873.5,325.6 L874.5,325.8 L875.5,325.6 L876.5,325.3 L877.5,326.2 L878.5,326.3 L879.5,325.0 L880.5,326.5 L881.5,325.4 L882.5,325.5 L883.5,326.6 L884.5,325.1 L885.5,325.0 L886.5,325.4 L887.5,325.2 L888.5,325.0 L889.5,326.3 L890.5,325.5 L891.5,324.1 L892.5,320.9 L893.5,317.8 L894.5,314.7 L895.5,311.6 L896.5,308.5 L897.5,305.4 L898.5,302.3 L899.5,299.2 L900.5,296.3 L901.5,293.6 L902.5,290.9 L903.5,288.3 L904.5,285.6 L905.5,288.3 L906.5,290.9 L907.5,293.6 L908.5,296.3 L909.5,298.9 L910.5,301.6 L911.5,304.2 L912.5,306.9 L913.5,309.5 L914.5,312.2 L915.5,314.8 L916.5,317.5 L917.5,320.1 L918.5,322.8 L919.5,325.5 L920.5,328.1 L921.5,330.8 L922.5,333.4 L923.5,336.1 L924.5,338.7 L925.5,341.4 L926.5,344.0 L927.5,346.7 L928.5,349.3 L929.5,352.0 L930.5,354.6 L931.5,357.3 L932.5,359.9 L933.5,360.2 L934.5,360.2 L935.5,360.2 L936.5,360.2 L937.5,360.2 L938.5,360.2 L939.5,360.2 L940.5,360.2 L941.5,360.2 L942.5,360.2 L943.5,360.2 L944.5,360.2 L945.5,360.2 L946.5,357.3 L947.5,354.0 L948.5,350.7 L949.5,347.4 L950.5,344.1 L951.5,340.9 L952.5,337.6 L953.5,334.3 L954.5,331.0 L955.5,327.8 L956.5,325.4 L957.5,324.8 L958.5,324.8 L959.5,324.7 L960.5,325.2 L961.5,324.6 L962.5,324.9 L963.5,324.9 L964.5,325.7 L965.5,326.0 L966.5,325.8 L967.5,325.4 L968.5,325.8 L969.5,324.4 L970.5,324.9 L971.5,324.7 L972.5,324.7 L973.5,324.6 L974.5,324.9 L975.5,325.8 L976.5,324.3 L977.5,324.3 L978.5,324.8 L979.5,324.7 L980.5,324.4 L981.5,325.5 L982.5,324.2 L983.5,325.1 L984.5,325.4 L985.5,325.0 L986.5,324.1 L987.5,325.0 L988.5,324.0 L989.5,321.0 L990.5,318.0 L991.5,315.0 L992.5,312.0 L993.5,309.0 L994.5,306.0 L995.5,303.0 L996.5,300.0 L997.5,297.1 L998.5,294.4 L999.5,291.7 L1000.5,289.1 L1001.5,286.4 L1002.5,287.5 L1003.5,290.2 L1004.5,292.8 L1005.5,295.5 L1006.5,298.1 L1007.5,300.8 L1008.5,303.4 L1009.5,306.1 L1010.5,308.7 L1011.5,311.4 L1012.5,314.0 L1013.5,316.7 L1014.5,319.4 L1015.5,322.0 L1016.5,324.7 L1017.5,327.3 L1018.5,330.0 L1019.5,332.6 L1020.5,335.3 L1021.5,337.9 L1022.5,340.6 L1023.5,343.2 L1024.5,345.9 L1025.5,348.5 L1026.5,351.2 L1027.5,353.8 L1028.5,356.5 L1029.5,359.1 L1030.5,360.2 L1031.5,360.2 L1032.5,360.2 L1033.5,360.2 L1034.5,360.2 L1035.5,360.2 L1036.5,360.2 L1037.5,360.2 L1038.5,360.2 L1039.5,360.2 L1040.5,360.2 L1041.5,360.2 L1042.5,360.2 L1043.5,358.2 L1044.5,354.8 L1045.5,351.4 L1046.5,348.0 L1047.5,344.6 L1048.5,341.2 L1049.5,337.8 L1050.5,334.4 L1051.5,331.0 L1052.5,327.6 L1053.5,323.8 L1054.5,323.3 L1055.5,324.2 L1056.5,324.3 L1057.5,324.1 L1058.5,323.7 L1059.5,323.5 L1060.5,323.8 L1061.5,323.7 L1062.5,324.7 L1063.5,324.6 L1064.5,324.3 L1065.5,323.4 L1066.5,324.2 L1067.5,323.6 L1068.5,324.7 L1069.5,324.5 L1070.5,324.1 L1071.5,323.3 L1072.5,323.2 L1073.5,323.2 L1074.5,323.9 L1075.5,323.5 L1076.5,323.6 L1077.5,323.5 L1078.5,324.1 L1079.5,322.7 L1080.5,323.9 L1081.5,322.4 L1082.5,322.5 L1083.5,324.2 L1084.5,323.3 L1085.5,323.6 L1086.5,320.8 L1087.5,317.9 L1088.5,315.1 L1089.5,312.2 L1090.5,309.3 L1091.5,306.5 L1092.5,303.6 L1093.5,300.7 L1094.5,297.9 L1095.5,295.2 L1096.5,292.5 L1097.5,289.9 L1098.5,287.2 L1099.5,286.7 L1100.5,289.4 L1101.5,292.0 L1102.5,294.7 L1103.5,297.3 L1104.5,300.0 L1105.5,302.6 L1106.5,305.3 L1107.5,307.9 L1108.5,310.6 L1109.5,313.3 L1110.5,315.9 L1111.5,318.6 L1112.5,321.2 L1113.5,323.9 L1114.5,326.5 L1115.5,329.2 L1116.5,331.8 L1117.5,334.5 L1118.5,337.1 L1119.5,339.8 L1120.5,342.4 L1121.5,345.1 L1122.5,347.7 L1123.5,350.4 L1124.5,353.0 L1125.5,355.7 L1126.5,358.3 L1127.5,360.2 L1128.5,360.2 L1129.5,360.2 L1130.5,360.2 L1131.5,360.2 L1132.5,360.2 L1133.5,360.2 L1134.5,360.2 L1135.5,360.2 L1136.5,360.2 L1137.5,360.2 L1138.5,360.2 L1139.5,360.2 L1140.5,359.2 L1141.5,356.0 L1142.5,352.7 L1143.5,349.5 L1144.5,346.2 L1145.5,343.0 L1146.5,339.7 L1147.5,336.5 L1148.5,333.2 L1149.5,330.0 L1150.5,326.7 L1151.5,325.1 L1152.5,324.8 L1153.5,325.8 L1154.5,326.1 L1155.5,326.2 L1156.5,324.8 L1157.5,326.1 L1158.5,325.4 L1159.5,326.2 L1160.5,325.4 L1161.5,324.6 L1162.5,326.1 L1163.5,324.8 L1164.5,325.3 L1165.5,324.6 L1166.5,324.9 L1167.5,325.8 L1168.5,324.5 L1169.5,325.2 L1170.5,326.0 L1171.5,326.1 L1172.5,325.1 L1173.5,325.2 L1174.5,325.4 L1175.5,325.7 L1176.5,325.3 L1177.5,325.3 L1178.5,324.3 L1179.5,325.8 L1180.5,324.4 L1181.5,324.2 L1182.5,325.5 L1183.5,323.0 L1184.5,320.0 L1185.5,317.0 L1186.5,314.0 L1187.5,310.9 L1188.5,307.9 L1189.5,304.9 L1190.5,301.8 L1191.5,298.8 L1192.5,296.0 L1193.5,293.3 L1194.5,290.7 L1195.5,288.0 L1196.5,285.9 L1197.5,288.6 L1198.5,291.2 L1199.5,293.9 L1200.5,296.5 L1201.5,299.2 L1202.5,301.8 L1203.5,304.5 L1204.5,307.1 L1205.5,309.8 L1206.5,312.5 L1207.5,315.1 L1208.5,317.8 L1209.5,320.4 L1210.5,323.1 L1211.5,325.7 L1212.5,328.4 L1213.5,331.0 L1214.5,333.7 L1215.5,336.3 L1216.5,339.0 L1217.5,341.6 L1218.5,344.3 L1219.5,346.9 L1220.5,349.6 L1221.5,352.2 L1222.5,354.9 L1223.5,357.5 L1224.5,360.2 L1225.5,360.2 L1226.5,360.2 L1227.5,360.2 L1228.5,360.2 L1229.5,360.2 L1230.5,360.2 L1231.5,360.2 L1232.5,360.2 L1233.5,360.2 L1234.5,360.2 L1235.5,360.2 L1236.5,360.2 L1237.5,360.2 L1238.5,357.0 L1239.5,353.9 L1240.5,350.7 L1241.5,347.5 L1242.5,344.3 L1243.5,341.2 L1244.5,338.0 L1245.5,334.8 L1246.5,331.6 L1247.5,328.5 L1248.5,325.7 L1249.5,326.1 L1250.5,325.7 L1251.5,326.8 L1252.5,326.7 L1253.5,326.6 L1254.5,325.4 L1255.5,326.2 L1256.5,326.6 L1257.5,326.4 L1258.5,326.6 L1259.5,327.0 L1260.5,326.9 L1261.5,325.5 L1262.5,326.5 L1263.5,325.3 L1264.5,326.5 L1265.5,326.4 L1266.5,326.0 L1267.5,326.5 L1268.5,326.2 L1269.5,325.0 L1270.5,325.1 L1271.5,325.2 L1272.5,325.5 L1273.5,325.0" stroke="#c8185e" stroke-width="1" stroke-dasharray="7 6"/>
<path d="M685.5,316.5 L686.5,313.3 L687.5,310.1 L688.5,306.9 L689.5,303.7 L690.5,300.5 L691.5,297.3 L692.5,294.7 L693.5,292.0 L694.5,289.4 L695.5,286.7 L696.5,287.2 L697.5,289.9 L698.5,292.5 L699.5,295.2 L700.5,297.9 L701.5,300.5 L702.5,303.2 L703.5,305.8 L704.5,308.5 L705.5,311.1 L706.5,313.8 L707.5,316.4 L708.5,319.1 L709.5,321.7 L710.5,324.4 L711.5,327.0 L712.5,329.7 L713.5,332.3 L714.5,335.0 L715.5,337.7 L716.5,340.3 L717.5,343.0 L718.5,345.6 L719.5,348.3 L720.5,350.9 L721.5,353.6 L722.5,356.2 L723.5,358.9 L724.5,360.2 L725.5,360.2 L726.5,360.2 L727.5,360.2 L728.5,360.2 L729.5,360.2 L730.5,360.2 L731.5,360.2 L732.5,360.2 L733.5,360.2 L734.5,360.2 L735.5,360.2 L736.5,360.2 L737.5,358.9 L738.5,356.3 L739.5,353.7 L740.5,351.1 L741.5,348.5 L742.5,345.9 L743.5,343.3 L744.5,340.7 L745.5,338.1 L746.5,335.5 L747.5,332.9 L748.5,333.2 L749.5,333.7 L750.5,332.1 L751.5,333.9 L752.5,332.4 L753.5,332.9 L754.5,333.8 L755.5,332.4 L756.5,333.8 L757.5,332.6 L758.5,333.7 L759.5,333.6 L760.5,332.5 L761.5,331.2 L762.5,333.4 L763.5,333.0 L764.5,331.7 L765.5,330.7 L766.5,331.8 L767.5,332.4 L768.5,330.5 L769.5,333.4 L770.5,330.8 L771.5,332.6 L772.5,333.0 L773.5,333.0 L774.5,332.4 L775.5,330.8 L776.5,332.8 L777.5,331.5 L778.5,331.3 L779.5,332.3 L780.5,328.5 L781.5,324.7 L782.5,321.0 L783.5,317.2 L784.5,313.4 L785.5,309.7 L786.5,305.9 L787.5,302.1 L788.5,298.4 L789.5,295.5 L790.5,292.8 L791.5,290.2 L792.5,287.5 L793.5,286.4 L794.5,289.1 L795.5,291.7 L796.5,294.4 L797.5,297.1 L798.5,299.7 L799.5,302.4 L800.5,305.0 L801.5,307.7 L802.5,310.3 L803.5,313.0 L804.5,315.6 L805.5,318.3 L806.5,320.9 L807.5,323.6 L808.5,326.2 L809.5,328.9 L810.5,331.6 L811.5,334.2 L812.5,336.9 L813.5,339.5 L814.5,342.2 L815.5,344.8 L816.5,347.5 L817.5,350.1 L818.5,352.8 L819.5,355.4 L820.5,358.1 L821.5,360.2 L822.5,360.2 L823.5,360.2 L824.5,360.2 L825.5,360.2 L826.5,360.2 L827.5,360.2 L828.5,360.2 L829.5,360.2 L830.5,360.2 L831.5,360.2 L832.5,360.2 L833.5,360.2 L834.5,359.6 L835.5,356.5 L836.5,353.4 L837.5,350.3 L838.5,347.2 L839.5,344.1 L840.5,341.0 L841.5,337.9 L842.5,334.8 L843.5,331.7 L844.5,328.6 L845.5,327.7 L846.5,327.1 L847.5,328.6 L848.5,328.6 L849.5,328.1 L850.5,326.6 L851.5,327.4 L852.5,327.7 L853.5,326.8 L854.5,327.2 L855.5,327.6 L856.5,326.1 L857.5,326.3 L858.5,327.7 L859.5,326.6 L860.5,326.8 L861.5,325.6 L862.5,326.1 L863.5,327.4 L864.5,325.2 L865.5,327.9 L866.5,326.9 L867.5,325.8 L868.5,327.7 L869.5,326.6 L870.5,328.0 L871.5,326.0 L872.5,325.6 L873.5,326.2 L874.5,325.2 L875.5,327.0 L876.5,325.7 L877.5,324.8 L878.5,321.6 L879.5,318.4 L880.5,315.2 L881.5,312.0 L882.5,308.8 L883.5,305.6 L884.5,302.4 L885.5,299.2 L886.5,296.3 L887.5,293.6 L888.5,290.9 L889.5,288.3 L890.5,285.6 L891.5,288.3 L892.5,290.9 L893.5,293.6 L894.5,296.3 L895.5,298.9 L896.5,301.6 L897.5,304.2 L898.5,306.9 L899.5,309.5 L900.5,312.2 L901.5,314.8 L902.5,317.5 L903.5,320.1 L904.5,322.8 L905.5,325.5 L906.5,328.1 L907.5,330.8 L908.5,333.4 L909.5,336.1 L910.5,338.7 L911.5,341.4 L912.5,344.0 L913.5,346.7 L914.5,349.3 L915.5,352.0 L916.5,354.6 L917.5,357.3 L918.5,359.9 L919.5,360.2 L920.5,360.2 L921.5,360.2 L922.5,360.2 L923.5,360.2 L924.5,360.2 L925.5,360.2 L926.5,360.2 L927.5,360.2 L928.5,360.2 L929.5,360.2 L930.5,360.2 L931.5,360.2 L932.5,357.3 L933.5,354.1 L934.5,350.9 L935.5,347.7 L936.5,344.5 L937.5,341.3 L938.5,338.1 L939.5,334.9 L940.5,331.7 L941.5,328.5 L942.5,325.9 L943.5,325.9 L944.5,326.3 L945.5,325.1 L946.5,324.7 L947.5,326.2 L948.5,325.5 L949.5,327.4 L950.5,325.3 L951.5,325.5 L952.5,324.4 L953.5,324.9 L954.5,326.5 L955.5,326.2 L956.5,325.3 L957.5,327.3 L958.5,325.8 L959.5,326.7 L960.5,326.9 L961.5,327.0 L962.5,324.8 L963.5,326.7 L964.5,326.3 L965.5,325.9 L966.5,324.3 L967.5,326.8 L968.5,325.6 L969.5,325.2 L970.5,324.2 L971.5,324.3 L972.5,324.2 L973.5,326.0 L974.5,324.7 L975.5,321.6 L976.5,318.5 L977.5,315.5 L978.5,312.4 L979.5,309.3 L980.5,306.2 L981.5,303.1 L982.5,300.1 L983.5,297.1 L984.5,294.4 L985.5,291.7 L986.5,289.1 L987.5,286.4 L988.5,287.5 L989.5,290.2 L990.5,292.8 L991.5,295.5 L992.5,298.1 L993.5,300.8 L994.5,303.4 L995.5,306.1 L996.5,308.7 L997.5,311.4 L998.5,314.0 L999.5,316.7 L1000.5,319.4 L1001.5,322.0 L1002.5,324.7 L1003.5,327.3 L1004.5,330.0 L1005.5,332.6 L1006.5,335.3 L1007.5,337.9 L1008.5,340.6 L1009.5,343.2 L1010.5,345.9 L1011.5,348.5 L1012.5,351.2 L1013.5,353.8 L1014.5,356.5 L1015.5,359.1 L1016.5,360.2 L1017.5,360.2 L1018.5,360.2 L1019.5,360.2 L1020.5,360.2 L1021.5,360.2 L1022.5,360.2 L1023.5,360.2 L1024.5,360.2 L1025.5,360.2 L1026.5,360.2 L1027.5,360.2 L1028.5,360.2 L1029.5,358.2 L1030.5,354.9 L1031.5,351.6 L1032.5,348.2 L1033.5,344.9 L1034.5,341.6 L1035.5,338.3 L1036.5,335.0 L1037.5,331.6 L1038.5,328.3 L1039.5,325.3 L1040.5,325.4 L1041.5,323.7 L1042.5,323.5 L1043.5,326.0 L1044.5,325.8 L1045.5,325.6 L1046.5,325.6 L1047.5,324.8 L1048.5,324.4 L1049.5,325.4 L1050.5,326.2 L1051.5,324.9 L1052.5,325.0 L1053.5,324.3 L1054.5,323.1 L1055.5,323.9 L1056.5,324.4 L1057.5,324.1 L1058.5,323.8 L1059.5,325.8 L1060.5,323.1 L1061.5,323.4 L1062.5,323.1 L1063.5,323.3 L1064.5,324.5 L1065.5,324.5 L1066.5,325.4 L1067.5,323.7 L1068.5,325.4 L1069.5,325.4 L1070.5,324.9 L1071.5,324.4 L1072.5,321.5 L1073.5,318.5 L1074.5,315.6 L1075.5,312.6 L1076.5,309.7 L1077.5,306.7 L1078.5,303.8 L1079.5,300.8 L1080.5,297.9 L1081.5,295.2 L1082.5,292.5 L1083.5,289.9 L1084.5,287.2 L1085.5,286.7 L1086.5,289.4 L1087.5,292.0 L1088.5,294.7 L1089.5,297.3 L1090.5,300.0 L1091.5,302.6 L1092.5,305.3 L1093.5,307.9 L1094.5,310.6 L1095.5,313.3 L1096.5,315.9 L1097.5,318.6 L1098.5,321.2 L1099.5,323.9 L1100.5,326.5 L1101.5,329.2 L1102.5,331.8 L1103.5,334.5 L1104.5,337.1 L1105.5,339.8 L1106.5,342.4 L1107.5,345.1 L1108.5,347.7 L1109.5,350.4 L1110.5,353.0 L1111.5,355.7 L1112.5,358.3 L1113.5,360.2 L1114.5,360.2 L1115.5,360.2 L1116.5,360.2 L1117.5,360.2 L1118.5,360.2 L1119.5,360.2 L1120.5,360.2 L1121.5,360.2 L1122.5,360.2 L1123.5,360.2 L1124.5,360.2 L1125.5,360.2 L1126.5,359.2 L1127.5,356.1 L1128.5,352.9 L1129.5,349.7 L1130.5,346.6 L1131.5,343.4 L1132.5,340.2 L1133.5,337.0 L1134.5,333.9 L1135.5,330.7 L1136.5,327.5 L1137.5,327.6 L1138.5,327.0 L1139.5,327.9 L1140.5,328.0 L1141.5,327.5 L1142.5,327.6 L1143.5,326.8 L1144.5,327.8 L1145.5,325.1 L1146.5,325.9 L1147.5,327.3 L1148.5,327.0 L1149.5,326.6 L1150.5,326.5 L1151.5,327.3 L1152.5,325.0 L1153.5,324.5 L1154.5,326.1 L1155.5,326.0 L1156.5,327.2 L1157.5,327.1 L1158.5,326.4 L1159.5,326.6 L1160.5,324.8 L1161.5,326.8 L1162.5,327.2 L1163.5,324.3 L1164.5,325.6 L1165.5,326.8 L1166.5,325.5 L1167.5,327.1 L1168.5,325.5 L1169.5,323.8 L1170.5,320.6 L1171.5,317.5 L1172.5,314.4 L1173.5,311.3 L1174.5,308.2 L1175.5,305.1 L1176.5,302.0 L1177.5,298.8 L1178.5,296.0 L1179.5,293.3 L1180.5,290.7 L1181.5,288.0 L1182.5,285.9 L1183.5,288.6 L1184.5,291.2 L1185.5,293.9 L1186.5,296.5 L1187.5,299.2 L1188.5,301.8 L1189.5,304.5 L1190.5,307.1 L1191.5,309.8 L1192.5,312.5 L1193.5,315.1 L1194.5,317.8 L1195.5,320.4 L1196.5,323.1 L1197.5,325.7 L1198.5,328.4 L1199.5,331.0 L1200.5,333.7 L1201.5,336.3 L1202.5,339.0 L1203.5,341.6 L1204.5,344.3 L1205.5,346.9 L1206.5,349.6 L1207.5,352.2 L1208.5,354.9 L1209.5,357.5 L1210.5,360.2 L1211.5,360.2 L1212.5,360.2 L1213.5,360.2 L1214.5,360.2 L1215.5,360.2 L1216.5,360.2 L1217.5,360.2 L1218.5,360.2 L1219.5,360.2 L1220.5,360.2 L1221.5,360.2 L1222.5,360.2 L1223.5,360.2 L1224.5,357.1 L1225.5,354.0 L1226.5,350.9 L1227.5,347.8 L1228.5,344.7 L1229.5,341.6 L1230.5,338.5 L1231.5,335.4 L1232.5,332.3 L1233.5,329.2 L1234.5,325.8 L1235.5,326.2 L1236.5,326.6 L1237.5,328.0 L1238.5,327.6 L1239.5,328.2 L1240.5,326.3 L1241.5,327.0 L1242.5,326.2 L1243.5,327.6 L1244.5,327.9 L1245.5,326.0 L1246.5,325.4 L1247.5,325.8 L1248.5,325.9 L1249.5,325.9 L1250.5,326.1 L1251.5,327.6 L1252.5,326.7 L1253.5,327.2 L1254.5,328.2 L1255.5,328.1 L1256.5,327.3 L1257.5,327.4 L1258.5,326.0 L1259.5,325.1 L1260.5,326.7 L1261.5,325.1 L1262.5,324.9 L1263.5,325.0 L1264.5,326.8 L1265.5,327.2 L1266.5,325.4 L1267.5,322.2 L1268.5,319.0 L1269.5,315.8 L1270.5,312.6 L1271.5,309.4 L1272.5,306.2 L1273.5,303.0" stroke="#c8185e" stroke-width="1.1"/>
</g>
<g clip-path="url(#cpb)" fill="none" stroke-linejoin="round">
<path d="M685.5,416.5 L686.5,414.7 L687.5,413.9 L688.5,411.7 L689.5,411.3 L690.5,411.6 L691.5,409.6 L692.5,410.6 L693.5,408.9 L694.5,408.5 L695.5,408.1 L696.5,407.8 L697.5,405.6 L698.5,407.8 L699.5,406.0 L700.5,404.7 L701.5,407.0 L702.5,406.7 L703.5,405.2 L704.5,405.4 L705.5,404.8 L706.5,404.1 L707.5,406.0 L708.5,405.4 L709.5,405.3 L710.5,405.9 L711.5,403.1 L712.5,403.3 L713.5,403.4 M714.5,462.7 L715.5,462.7 L716.5,462.7 L717.5,462.7 L718.5,462.7 L719.5,462.7 L720.5,462.7 L721.5,462.7 L722.5,462.7 L723.5,462.7 L724.5,462.7 L725.5,462.7 L726.5,460.6 L727.5,459.6 L728.5,458.9 L729.5,457.3 L730.5,456.6 L731.5,455.7 L732.5,454.8 L733.5,453.4 L734.5,452.5 L735.5,450.9 L736.5,449.1 L737.5,448.0 L738.5,446.6 L739.5,445.6 L740.5,445.1 L741.5,443.5 L742.5,442.5 L743.5,440.8 L744.5,440.0 L745.5,439.3 L746.5,437.5 L747.5,435.8 L748.5,435.8 L749.5,433.6 L750.5,433.8 L751.5,433.5 L752.5,433.4 L753.5,431.6 L754.5,430.7 L755.5,431.1 L756.5,432.2 L757.5,430.3 L758.5,431.8 L759.5,431.8 L760.5,429.5 L761.5,430.1 L762.5,429.7 L763.5,429.6 L764.5,428.4 L765.5,429.7 L766.5,428.4 L767.5,428.6 L768.5,427.8 L769.5,428.9 L770.5,427.8 L771.5,428.1 L772.5,428.6 L773.5,428.2 L774.5,426.2 L775.5,426.1 L776.5,423.2 L777.5,423.6 L778.5,422.7 L779.5,421.3 L780.5,418.4 L781.5,418.4 L782.5,417.7 L783.5,416.7 L784.5,415.5 L785.5,412.9 L786.5,412.0 L787.5,411.1 L788.5,410.3 L789.5,411.0 L790.5,409.2 L791.5,409.0 L792.5,407.3 L793.5,406.6 L794.5,405.8 L795.5,407.8 L796.5,405.1 L797.5,404.8 L798.5,404.6 L799.5,407.0 L800.5,406.6 L801.5,406.7 L802.5,406.8 L803.5,404.1 L804.5,404.1 L805.5,404.5 L806.5,403.7 L807.5,404.2 L808.5,405.1 L809.5,405.5 L810.5,405.4 M811.5,462.7 L812.5,462.7 L813.5,462.7 L814.5,462.7 L815.5,462.7 L816.5,462.7 L817.5,462.7 L818.5,462.7 L819.5,462.7 L820.5,462.7 L821.5,462.7 L822.5,462.7 L823.5,461.5 L824.5,461.2 L825.5,459.8 L826.5,458.5 L827.5,457.9 L828.5,456.4 L829.5,455.2 L830.5,453.3 L831.5,452.7 L832.5,451.6 L833.5,449.4 L834.5,449.0 L835.5,447.3 L836.5,446.5 L837.5,446.2 L838.5,444.4 L839.5,443.2 L840.5,441.5 L841.5,441.0 L842.5,439.3 L843.5,438.4 L844.5,437.7 L845.5,435.5 L846.5,435.5 L847.5,433.2 L848.5,434.0 L849.5,434.3 L850.5,433.4 L851.5,431.4 L852.5,430.6 L853.5,433.3 L854.5,431.6 L855.5,431.4 L856.5,430.2 L857.5,431.9 L858.5,430.7 L859.5,430.9 L860.5,429.2 L861.5,430.7 L862.5,428.4 L863.5,430.2 L864.5,430.2 L865.5,428.5 L866.5,428.9 L867.5,429.8 L868.5,428.0 L869.5,429.5 L870.5,427.1 L871.5,426.7 L872.5,425.4 L873.5,424.5 L874.5,423.9 L875.5,422.6 L876.5,421.4 L877.5,419.2 L878.5,419.7 L879.5,416.8 L880.5,417.4 L881.5,415.9 L882.5,414.5 L883.5,412.0 L884.5,412.0 L885.5,411.5 L886.5,409.8 L887.5,410.4 L888.5,409.2 L889.5,408.4 L890.5,407.2 L891.5,406.5 L892.5,406.1 L893.5,406.8 L894.5,406.8 L895.5,407.1 L896.5,404.8 L897.5,405.3 L898.5,404.9 L899.5,406.5 L900.5,405.5 L901.5,404.3 L902.5,404.7 L903.5,406.0 L904.5,404.8 L905.5,403.3 L906.5,405.2 L907.5,405.2 L908.5,404.7 M909.5,462.7 L910.5,462.7 L911.5,462.7 L912.5,462.7 L913.5,462.7 L914.5,462.7 L915.5,462.7 L916.5,462.7 L917.5,462.7 L918.5,462.7 L919.5,462.7 L920.5,462.3 L921.5,460.9 L922.5,460.8 L923.5,459.6 L924.5,458.3 L925.5,457.0 L926.5,455.5 L927.5,454.9 L928.5,453.5 L929.5,452.5 L930.5,450.1 L931.5,449.3 L932.5,449.1 L933.5,446.6 L934.5,446.8 L935.5,445.2 L936.5,443.1 L937.5,442.2 L938.5,441.1 L939.5,440.4 L940.5,439.6 L941.5,437.7 L942.5,437.4 L943.5,436.1 L944.5,434.6 L945.5,434.0 L946.5,433.2 L947.5,431.7 L948.5,431.8 L949.5,432.2 L950.5,431.5 L951.5,431.8 L952.5,432.6 L953.5,430.9 L954.5,431.3 L955.5,430.1 L956.5,429.3 L957.5,430.6 L958.5,429.9 L959.5,429.1 L960.5,429.9 L961.5,430.3 L962.5,428.5 L963.5,427.8 L964.5,427.9 L965.5,427.9 L966.5,427.2 L967.5,427.5 L968.5,427.4 L969.5,426.8 L970.5,425.9 L971.5,424.0 L972.5,423.9 L973.5,422.1 L974.5,420.1 L975.5,419.1 L976.5,418.1 L977.5,417.7 L978.5,416.1 L979.5,414.9 L980.5,413.3 L981.5,412.6 L982.5,411.3 L983.5,410.1 L984.5,410.9 L985.5,409.2 L986.5,408.3 L987.5,408.4 L988.5,407.5 L989.5,405.7 L990.5,407.9 L991.5,406.2 L992.5,407.2 L993.5,405.1 L994.5,404.5 L995.5,405.6 L996.5,406.8 L997.5,405.2 L998.5,405.1 L999.5,404.4 L1000.5,404.9 L1001.5,404.3 L1002.5,403.6 L1003.5,404.4 L1004.5,404.6 L1005.5,402.8 L1006.5,404.9 M1007.5,462.7 L1008.5,462.7 L1009.5,462.7 L1010.5,462.7 L1011.5,462.7 L1012.5,462.7 L1013.5,462.7 L1014.5,462.7 L1015.5,462.7 L1016.5,462.7 L1017.5,462.7 L1018.5,461.8 L1019.5,461.1 L1020.5,459.4 L1021.5,459.2 L1022.5,456.7 L1023.5,456.5 L1024.5,455.8 L1025.5,454.3 L1026.5,452.9 L1027.5,452.3 L1028.5,450.5 L1029.5,449.3 L1030.5,447.7 L1031.5,447.1 L1032.5,446.1 L1033.5,444.9 L1034.5,443.0 L1035.5,441.5 L1036.5,441.0 L1037.5,440.3 L1038.5,438.2 L1039.5,437.7 L1040.5,436.8 L1041.5,435.7 L1042.5,433.5 L1043.5,432.0 L1044.5,432.3 L1045.5,432.6 L1046.5,432.1 L1047.5,432.9 L1048.5,430.4 L1049.5,432.1 L1050.5,431.0 L1051.5,430.2 L1052.5,430.0 L1053.5,430.8 L1054.5,431.1 L1055.5,430.1 L1056.5,431.2 L1057.5,428.8 L1058.5,430.0 L1059.5,428.3 L1060.5,429.9 L1061.5,429.3 L1062.5,429.4 L1063.5,428.7 L1064.5,429.2 L1065.5,429.5 L1066.5,426.9 L1067.5,426.7 L1068.5,425.5 L1069.5,424.2 L1070.5,422.7 L1071.5,421.6 L1072.5,420.0 L1073.5,418.7 L1074.5,418.2 L1075.5,415.8 L1076.5,414.8 L1077.5,415.2 L1078.5,412.4 L1079.5,411.3 L1080.5,410.8 L1081.5,411.4 L1082.5,409.3 L1083.5,409.0 L1084.5,409.6 L1085.5,408.9 L1086.5,406.2 L1087.5,406.1 L1088.5,407.2 L1089.5,407.5 L1090.5,407.2 L1091.5,406.8 L1092.5,404.9 L1093.5,406.1 L1094.5,406.6 L1095.5,404.1 L1096.5,404.3 L1097.5,406.0 L1098.5,403.7 L1099.5,404.4 L1100.5,403.7 L1101.5,403.9 L1102.5,403.0 L1103.5,403.2 M1104.5,462.7 L1105.5,462.7 L1106.5,462.7 L1107.5,462.7 L1108.5,462.7 L1109.5,462.7 L1110.5,462.7 L1111.5,462.7 L1112.5,462.7 L1113.5,462.7 L1114.5,462.7 L1115.5,462.7 L1116.5,461.1 L1117.5,460.9 L1118.5,459.0 L1119.5,458.1 L1120.5,456.6 L1121.5,455.9 L1122.5,454.0 L1123.5,453.4 L1124.5,452.6 L1125.5,451.5 L1126.5,450.5 L1127.5,448.8 L1128.5,448.3 L1129.5,446.5 L1130.5,445.8 L1131.5,444.1 L1132.5,442.9 L1133.5,441.6 L1134.5,440.0 L1135.5,440.1 L1136.5,437.7 L1137.5,437.1 L1138.5,435.7 L1139.5,434.4 L1140.5,433.0 L1141.5,433.3 L1142.5,432.9 L1143.5,431.0 L1144.5,433.5 L1145.5,431.6 L1146.5,431.3 L1147.5,433.0 L1148.5,431.0 L1149.5,430.5 L1150.5,429.5 L1151.5,431.2 L1152.5,428.9 L1153.5,430.1 L1154.5,430.0 L1155.5,428.5 L1156.5,430.9 L1157.5,428.6 L1158.5,428.7 L1159.5,429.3 L1160.5,427.5 L1161.5,428.8 L1162.5,428.2 L1163.5,427.8 L1164.5,426.4 L1165.5,426.3 L1166.5,424.7 L1167.5,423.5 L1168.5,422.0 L1169.5,420.3 L1170.5,420.2 L1171.5,417.9 L1172.5,417.6 L1173.5,416.2 L1174.5,415.5 L1175.5,413.8 L1176.5,411.6 L1177.5,411.5 L1178.5,410.5 L1179.5,410.8 L1180.5,410.1 L1181.5,409.4 L1182.5,408.1 L1183.5,407.3 L1184.5,406.3 L1185.5,407.9 L1186.5,405.6 L1187.5,405.0 L1188.5,405.9 L1189.5,407.3 L1190.5,406.3 L1191.5,407.1 L1192.5,406.4 L1193.5,404.0 L1194.5,404.8 L1195.5,404.5 L1196.5,403.9 L1197.5,403.4 L1198.5,404.2 L1199.5,404.0 L1200.5,403.8 L1201.5,403.4 M1202.5,462.7 L1203.5,462.7 L1204.5,462.7 L1205.5,462.7 L1206.5,462.7 L1207.5,462.7 L1208.5,462.7 L1209.5,462.7 L1210.5,462.7 L1211.5,462.7 L1212.5,462.7 L1213.5,462.2 L1214.5,460.9 L1215.5,460.4 L1216.5,458.6 L1217.5,457.7 L1218.5,456.1 L1219.5,455.9 L1220.5,454.6 L1221.5,453.7 L1222.5,451.4 L1223.5,450.0 L1224.5,449.2 L1225.5,448.5 L1226.5,446.6 L1227.5,445.5 L1228.5,444.7 L1229.5,444.0 L1230.5,442.7 L1231.5,441.4 L1232.5,440.3 L1233.5,439.0 L1234.5,437.5 L1235.5,435.9 L1236.5,436.1 L1237.5,434.1 L1238.5,433.7 L1239.5,434.0 L1240.5,431.6 L1241.5,432.1 L1242.5,430.8 L1243.5,432.1 L1244.5,433.2 L1245.5,431.8 L1246.5,430.9 L1247.5,429.6 L1248.5,429.3 L1249.5,430.6 L1250.5,430.6 L1251.5,431.3 L1252.5,429.4 L1253.5,430.5 L1254.5,430.5 L1255.5,430.7 L1256.5,430.5 L1257.5,428.2 L1258.5,429.7 L1259.5,426.8 L1260.5,429.3 L1261.5,426.9 L1262.5,427.2 L1263.5,426.2 L1264.5,423.6 L1265.5,423.4 L1266.5,421.2 L1267.5,421.1 L1268.5,420.2 L1269.5,417.5 L1270.5,416.5 L1271.5,415.0 L1272.5,414.1 L1273.5,414.2" stroke="#2d4a6a" stroke-width="1" stroke-dasharray="7 6"/>
<path d="M710.1,462.7 L710.1,419.6 M720.4,462.7 L720.4,405.9 M807.7,462.7 L807.7,419.6 M818.0,462.7 L818.0,405.9 M905.3,462.7 L905.3,419.6 M915.6,462.7 L915.6,405.9 M1002.9,462.7 L1002.9,419.6 M1013.2,462.7 L1013.2,405.9 M1100.5,462.7 L1100.5,419.6 M1110.8,462.7 L1110.8,405.9 M1198.1,462.7 L1198.1,419.6 M1208.4,462.7 L1208.4,405.9 " stroke="#2d4a6a" stroke-width="1.1" stroke-dasharray="7 5"/>
<path d="M685.5,430.6 L686.5,431.6 L687.5,430.1 L688.5,430.0 L689.5,427.1 L690.5,426.2 L691.5,424.1 L692.5,422.8 L693.5,422.1 L694.5,421.1 L695.5,417.8 L696.5,417.9 L697.5,415.7 L698.5,414.5 L699.5,413.1 L700.5,411.3 L701.5,410.1 L702.5,410.9 L703.5,409.4 L704.5,409.4 L705.5,408.2 L706.5,407.8 L707.5,407.6 L708.5,407.6 L709.5,407.3 L710.5,405.1 L711.5,406.2 L712.5,407.0 L713.5,404.8 L714.5,404.4 L715.5,406.0 L716.5,406.8 L717.5,406.6 L718.5,406.8 L719.5,405.9 L720.5,406.6 L721.5,406.0 L722.5,405.9 L723.5,404.8 L724.5,403.7 L725.5,462.7 L726.5,462.7 L727.5,462.7 L728.5,462.7 L729.5,462.7 L730.5,462.7 L731.5,462.7 L732.5,462.7 L733.5,462.7 L734.5,462.7 L735.5,462.7 L736.5,462.0 L737.5,461.5 L738.5,460.5 L739.5,459.3 L740.5,458.5 L741.5,457.5 L742.5,457.0 L743.5,455.6 L744.5,453.5 L745.5,453.8 L746.5,452.2 L747.5,451.0 L748.5,449.6 L749.5,449.6 L750.5,448.5 L751.5,447.5 L752.5,446.2 L753.5,445.1 L754.5,443.3 L755.5,442.5 L756.5,441.4 L757.5,441.7 L758.5,440.7 L759.5,438.6 L760.5,437.3 L761.5,436.9 L762.5,436.4 L763.5,438.0 L764.5,436.6 L765.5,434.7 L766.5,434.8 L767.5,434.4 L768.5,433.9 L769.5,435.9 L770.5,436.1 L771.5,435.7 L772.5,434.3 L773.5,433.6 L774.5,432.6 L775.5,433.0 L776.5,433.0 L777.5,432.5 L778.5,433.2 L779.5,432.7 L780.5,434.0 L781.5,431.5 L782.5,433.0 L783.5,430.6 L784.5,431.1 L785.5,430.4 L786.5,429.2 L787.5,427.5 L788.5,425.2 L789.5,423.6 L790.5,423.3 L791.5,421.9 L792.5,419.5 L793.5,417.9 L794.5,416.8 L795.5,415.6 L796.5,413.4 L797.5,413.3 L798.5,412.0 L799.5,410.9 L800.5,409.2 L801.5,409.1 L802.5,407.9 L803.5,408.1 L804.5,407.8 L805.5,407.1 L806.5,405.1 L807.5,405.8 L808.5,406.9 L809.5,407.7 L810.5,406.1 L811.5,405.4 L812.5,406.1 L813.5,406.5 L814.5,405.2 L815.5,404.3 L816.5,406.3 L817.5,406.8 L818.5,405.8 L819.5,405.4 L820.5,404.5 L821.5,405.9 L822.5,462.7 L823.5,462.7 L824.5,462.7 L825.5,462.7 L826.5,462.7 L827.5,462.7 L828.5,462.7 L829.5,462.7 L830.5,462.7 L831.5,462.7 L832.5,462.7 L833.5,462.7 L834.5,461.5 L835.5,460.6 L836.5,459.9 L837.5,459.4 L838.5,457.2 L839.5,457.2 L840.5,455.4 L841.5,455.3 L842.5,454.3 L843.5,452.4 L844.5,452.1 L845.5,450.1 L846.5,449.8 L847.5,449.2 L848.5,448.1 L849.5,446.8 L850.5,445.4 L851.5,444.0 L852.5,444.2 L853.5,442.8 L854.5,442.0 L855.5,439.8 L856.5,440.1 L857.5,439.2 L858.5,438.2 L859.5,437.1 L860.5,435.4 L861.5,435.2 L862.5,435.4 L863.5,434.4 L864.5,434.3 L865.5,436.0 L866.5,436.2 L867.5,433.6 L868.5,434.0 L869.5,436.0 L870.5,433.8 L871.5,434.5 L872.5,434.3 L873.5,434.2 L874.5,434.4 L875.5,434.7 L876.5,433.6 L877.5,433.2 L878.5,431.1 L879.5,433.4 L880.5,430.6 L881.5,432.7 L882.5,431.1 L883.5,428.7 L884.5,427.2 L885.5,426.5 L886.5,425.8 L887.5,423.5 L888.5,422.2 L889.5,419.6 L890.5,419.6 L891.5,417.7 L892.5,415.1 L893.5,415.4 L894.5,413.2 L895.5,411.3 L896.5,410.7 L897.5,411.5 L898.5,410.8 L899.5,410.0 L900.5,407.6 L901.5,408.2 L902.5,406.5 L903.5,405.3 L904.5,406.9 L905.5,407.1 L906.5,404.8 L907.5,405.8 L908.5,406.8 L909.5,405.3 L910.5,406.4 L911.5,406.4 L912.5,407.2 L913.5,404.8 L914.5,404.2 L915.5,404.9 L916.5,403.9 L917.5,406.6 L918.5,405.9 L919.5,405.0 L920.5,462.7 L921.5,462.7 L922.5,462.7 L923.5,462.7 L924.5,462.7 L925.5,462.7 L926.5,462.7 L927.5,462.7 L928.5,462.7 L929.5,462.7 L930.5,462.7 L931.5,461.9 L932.5,460.9 L933.5,460.7 L934.5,459.9 L935.5,458.6 L936.5,457.5 L937.5,455.8 L938.5,456.0 L939.5,454.0 L940.5,453.1 L941.5,451.9 L942.5,451.0 L943.5,450.2 L944.5,449.6 L945.5,448.6 L946.5,447.5 L947.5,445.8 L948.5,445.9 L949.5,444.7 L950.5,442.8 L951.5,442.6 L952.5,441.9 L953.5,440.9 L954.5,439.1 L955.5,438.4 L956.5,436.4 L957.5,435.5 L958.5,435.0 L959.5,437.0 L960.5,437.3 L961.5,437.1 L962.5,435.6 L963.5,434.7 L964.5,435.3 L965.5,435.7 L966.5,434.9 L967.5,434.1 L968.5,433.7 L969.5,433.2 L970.5,432.7 L971.5,433.0 L972.5,434.5 L973.5,432.0 L974.5,433.5 L975.5,432.4 L976.5,432.8 L977.5,431.5 L978.5,432.9 L979.5,432.5 L980.5,430.8 L981.5,429.5 L982.5,426.5 L983.5,425.6 L984.5,424.7 L985.5,423.0 L986.5,420.3 L987.5,419.8 L988.5,418.9 L989.5,416.2 L990.5,415.1 L991.5,412.9 L992.5,413.2 L993.5,411.7 L994.5,410.3 L995.5,409.6 L996.5,408.7 L997.5,409.8 L998.5,408.6 L999.5,408.2 L1000.5,407.4 L1001.5,405.0 L1002.5,406.1 L1003.5,405.0 L1004.5,406.6 L1005.5,405.0 L1006.5,406.2 L1007.5,406.6 L1008.5,404.9 L1009.5,404.3 L1010.5,406.8 L1011.5,405.2 L1012.5,405.0 L1013.5,406.2 L1014.5,405.6 L1015.5,406.2 L1016.5,405.9 L1017.5,405.7 L1018.5,462.7 L1019.5,462.7 L1020.5,462.7 L1021.5,462.7 L1022.5,462.7 L1023.5,462.7 L1024.5,462.7 L1025.5,462.7 L1026.5,462.7 L1027.5,462.7 L1028.5,462.7 L1029.5,462.0 L1030.5,460.9 L1031.5,460.6 L1032.5,459.9 L1033.5,458.4 L1034.5,456.8 L1035.5,456.6 L1036.5,455.3 L1037.5,454.5 L1038.5,452.6 L1039.5,451.9 L1040.5,451.6 L1041.5,450.6 L1042.5,449.1 L1043.5,447.8 L1044.5,446.7 L1045.5,446.5 L1046.5,445.4 L1047.5,443.5 L1048.5,443.0 L1049.5,442.1 L1050.5,441.1 L1051.5,439.1 L1052.5,439.0 L1053.5,437.6 L1054.5,437.3 L1055.5,436.9 L1056.5,435.3 L1057.5,434.6 L1058.5,436.4 L1059.5,436.7 L1060.5,434.8 L1061.5,436.2 L1062.5,436.6 L1063.5,433.6 L1064.5,434.8 L1065.5,433.4 L1066.5,434.4 L1067.5,432.7 L1068.5,433.8 L1069.5,434.5 L1070.5,434.7 L1071.5,432.8 L1072.5,432.3 L1073.5,431.3 L1074.5,433.6 L1075.5,431.7 L1076.5,432.3 L1077.5,431.1 L1078.5,430.4 L1079.5,428.6 L1080.5,426.6 L1081.5,424.3 L1082.5,424.5 L1083.5,422.2 L1084.5,420.1 L1085.5,418.3 L1086.5,418.4 L1087.5,417.0 L1088.5,413.9 L1089.5,412.3 L1090.5,412.1 L1091.5,412.3 L1092.5,409.8 L1093.5,410.2 L1094.5,408.4 L1095.5,408.3 L1096.5,407.2 L1097.5,407.9 L1098.5,405.7 L1099.5,407.3 L1100.5,406.7 L1101.5,405.2 L1102.5,405.1 L1103.5,407.0 L1104.5,406.8 L1105.5,406.2 L1106.5,405.7 L1107.5,406.0 L1108.5,406.7 L1109.5,406.3 L1110.5,404.7 L1111.5,404.0 L1112.5,406.6 L1113.5,404.9 L1114.5,404.2 L1115.5,462.7 L1116.5,462.7 L1117.5,462.7 L1118.5,462.7 L1119.5,462.7 L1120.5,462.7 L1121.5,462.7 L1122.5,462.7 L1123.5,462.7 L1124.5,462.7 L1125.5,462.7 L1126.5,462.7 L1127.5,462.5 L1128.5,460.2 L1129.5,460.3 L1130.5,458.6 L1131.5,457.6 L1132.5,456.5 L1133.5,456.0 L1134.5,454.8 L1135.5,453.5 L1136.5,452.7 L1137.5,451.3 L1138.5,450.6 L1139.5,449.6 L1140.5,449.3 L1141.5,447.3 L1142.5,446.5 L1143.5,445.9 L1144.5,444.0 L1145.5,443.0 L1146.5,442.5 L1147.5,441.9 L1148.5,440.4 L1149.5,440.0 L1150.5,438.9 L1151.5,437.4 L1152.5,438.0 L1153.5,436.7 L1154.5,436.3 L1155.5,437.5 L1156.5,435.4 L1157.5,436.9 L1158.5,434.7 L1159.5,434.3 L1160.5,434.9 L1161.5,436.1 L1162.5,434.5 L1163.5,434.7 L1164.5,432.7 L1165.5,434.9 L1166.5,432.5 L1167.5,431.8 L1168.5,432.4 L1169.5,431.9 L1170.5,433.6 L1171.5,431.0 L1172.5,432.3 L1173.5,430.6 L1174.5,430.5 L1175.5,431.2 L1176.5,428.5 L1177.5,426.7 L1178.5,427.0 L1179.5,424.9 L1180.5,422.6 L1181.5,422.3 L1182.5,419.3 L1183.5,419.1 L1184.5,416.5 L1185.5,416.4 L1186.5,414.2 L1187.5,411.8 L1188.5,412.4 L1189.5,411.6 L1190.5,410.4 L1191.5,410.1 L1192.5,409.9 L1193.5,408.9 L1194.5,408.3 L1195.5,406.0 L1196.5,406.0 L1197.5,405.2 L1198.5,407.4 L1199.5,405.3 L1200.5,407.3 L1201.5,405.9 L1202.5,405.5 L1203.5,406.3 L1204.5,404.6 L1205.5,405.5 L1206.5,405.3 L1207.5,404.2 L1208.5,406.6 L1209.5,403.7 L1210.5,404.7 L1211.5,405.4 L1212.5,404.0 L1213.5,462.7 L1214.5,462.7 L1215.5,462.7 L1216.5,462.7 L1217.5,462.7 L1218.5,462.7 L1219.5,462.7 L1220.5,462.7 L1221.5,462.7 L1222.5,462.7 L1223.5,462.7 L1224.5,462.7 L1225.5,460.6 L1226.5,460.2 L1227.5,459.6 L1228.5,457.9 L1229.5,457.4 L1230.5,456.8 L1231.5,454.9 L1232.5,454.9 L1233.5,452.7 L1234.5,452.6 L1235.5,451.0 L1236.5,449.4 L1237.5,449.0 L1238.5,447.9 L1239.5,447.4 L1240.5,446.8 L1241.5,445.8 L1242.5,444.6 L1243.5,442.8 L1244.5,442.1 L1245.5,441.0 L1246.5,439.3 L1247.5,439.5 L1248.5,438.3 L1249.5,436.7 L1250.5,438.2 L1251.5,438.0 L1252.5,436.7 L1253.5,437.2 L1254.5,436.2 L1255.5,436.4 L1256.5,435.1 L1257.5,434.8 L1258.5,435.8 L1259.5,434.3 L1260.5,434.5 L1261.5,435.3 L1262.5,432.6 L1263.5,434.5 L1264.5,434.6 L1265.5,434.5 L1266.5,432.6 L1267.5,431.7 L1268.5,431.7 L1269.5,432.7 L1270.5,432.9 L1271.5,433.4 L1272.5,431.1 L1273.5,429.8" stroke="#2d4a6a" stroke-width="1.1"/>
</g>
<line x1="685.5" x2="685.5" y1="297" y2="360.7" stroke="#c8185e" stroke-width="1.2"/>
<line x1="679" x2="685.5" y1="360.2" y2="360.2" stroke="#c8185e" stroke-width="1.2"/>
<line x1="679" x2="685.5" y1="344.6" y2="344.6" stroke="#c8185e" stroke-width="1.2"/>
<line x1="679" x2="685.5" y1="328.9" y2="328.9" stroke="#c8185e" stroke-width="1.2"/>
<line x1="679" x2="685.5" y1="313.2" y2="313.2" stroke="#c8185e" stroke-width="1.2"/>
<line x1="679" x2="685.5" y1="297.6" y2="297.6" stroke="#c8185e" stroke-width="1.2"/>
<line x1="685.5" x2="685.5" y1="399.5" y2="463.2" stroke="#2d4a6a" stroke-width="1.2"/>
<line x1="679" x2="685.5" y1="462.7" y2="462.7" stroke="#2d4a6a" stroke-width="1.2"/>
<line x1="679" x2="685.5" y1="449.8" y2="449.8" stroke="#2d4a6a" stroke-width="1.2"/>
<line x1="679" x2="685.5" y1="436.9" y2="436.9" stroke="#2d4a6a" stroke-width="1.2"/>
<line x1="679" x2="685.5" y1="424.0" y2="424.0" stroke="#2d4a6a" stroke-width="1.2"/>
<line x1="679" x2="685.5" y1="411.1" y2="411.1" stroke="#2d4a6a" stroke-width="1.2"/>
<line x1="679" x2="685.5" y1="400.1" y2="400.1" stroke="#2d4a6a" stroke-width="1.2"/>
<line x1="685.5" x2="1274" y1="467" y2="467" stroke="#666" stroke-width="1.6"/>
<line x1="685.5" x2="685.5" y1="467" y2="471" stroke="#666" stroke-width="1.2"/>
<line x1="716.5" x2="716.5" y1="467" y2="471" stroke="#666" stroke-width="1.2"/>
<line x1="788.5" x2="788.5" y1="467" y2="471" stroke="#666" stroke-width="1.2"/>
<line x1="860.5" x2="860.5" y1="467" y2="471" stroke="#666" stroke-width="1.2"/>
<line x1="932.5" x2="932.5" y1="467" y2="471" stroke="#666" stroke-width="1.2"/>
<line x1="1004.5" x2="1004.5" y1="467" y2="471" stroke="#666" stroke-width="1.2"/>
<line x1="1076.5" x2="1076.5" y1="467" y2="471" stroke="#666" stroke-width="1.2"/>
<line x1="1148.5" x2="1148.5" y1="467" y2="471" stroke="#666" stroke-width="1.2"/>
<line x1="1220.5" x2="1220.5" y1="467" y2="471" stroke="#666" stroke-width="1.2"/>
<line x1="1273.5" x2="1273.5" y1="467" y2="471" stroke="#666" stroke-width="1.2"/>
</svg>
<div class="t r" style="right:673px;top:354.6px;font-size:11px;color:#3a3a3a">0</div>
<div class="t r" style="right:673px;top:338.9px;font-size:11px;color:#3a3a3a">10</div>
<div class="t r" style="right:673px;top:323.3px;font-size:11px;color:#3a3a3a">20</div>
<div class="t r" style="right:673px;top:307.6px;font-size:11px;color:#3a3a3a">30</div>
<div class="t r" style="right:673px;top:292.0px;font-size:11px;color:#3a3a3a">40</div>
<div class="t r" style="right:673px;top:457.1px;font-size:11px;color:#3a3a3a">0</div>
<div class="t r" style="right:673px;top:444.2px;font-size:11px;color:#3a3a3a">10</div>
<div class="t r" style="right:673px;top:431.3px;font-size:11px;color:#3a3a3a">20</div>
<div class="t r" style="right:673px;top:418.4px;font-size:11px;color:#3a3a3a">30</div>
<div class="t r" style="right:673px;top:405.5px;font-size:11px;color:#3a3a3a">40</div>
<div class="t r" style="right:673px;top:394.5px;font-size:11px;color:#3a3a3a">48.5</div>
<div class="t c" style="left:676.5px;width:80px;top:472.3px;font-size:10.2px;color:#3a3a3a">Wed, 2</div>
<div class="t c" style="left:748.5px;width:80px;top:472.3px;font-size:10.2px;color:#3a3a3a">01 AM</div>
<div class="t c" style="left:820.5px;width:80px;top:472.3px;font-size:10.2px;color:#3a3a3a">02 AM</div>
<div class="t c" style="left:892.5px;width:80px;top:472.3px;font-size:10.2px;color:#3a3a3a">03 AM</div>
<div class="t c" style="left:964.5px;width:80px;top:472.3px;font-size:10.2px;color:#3a3a3a">04 AM</div>
<div class="t c" style="left:1036.5px;width:80px;top:472.3px;font-size:10.2px;color:#3a3a3a">05 AM</div>
<div class="t c" style="left:1108.5px;width:80px;top:472.3px;font-size:10.2px;color:#3a3a3a">06 AM</div>
<div class="t c" style="left:1180.5px;width:80px;top:472.3px;font-size:10.2px;color:#3a3a3a">07 AM</div>

<!-- Text tile contents -->
<div class="t b" style="left:805px;top:151.5px;font-size:18px;letter-spacing:-0.4px;color:#2b48cf">My process</div>
<div class="t" style="left:424px;top:497.5px;font-size:16px;line-height:22px;color:#222;white-space:normal;width:130px">Number of<br>incidents on the<br>batch svstem.</div>
<div class="a" style="left:543px;top:500px;width:3px;height:40px;background:#bdbdbd"></div>
<div class="a" style="left:900px;top:496px;width:53px;height:22px;background:#d71414"></div>
<div class="t b" style="left:901px;top:500.3px;font-size:15px;color:#fff;font-style:italic;letter-spacing:-0.6px">ISSUES</div>
<div class="t" style="left:824px;top:540px;font-size:15.6px;color:#222">More details an the incidents:</div>
<div class="a" style="left:1276px;top:500px;width:3px;height:42px;background:#bdbdbd"></div>

<!-- Small table -->
<div class="t b" style="left:424.5px;top:582px;font-size:11.3px;color:#333">Table - Historical</div>
<div class="t" style="left:424.5px;top:597.5px;font-size:10.4px;color:#444">Event open: 10/12/...</div>
<div class="kb" style="left:525.5px;top:583px"><i style="top:7px"></i><i style="top:10.5px"></i><i style="top:14px"></i></div>
<div class="t" style="left:469.5px;top:645.5px;font-size:32px;color:#222">37</div>

<!-- Large table -->
<div class="t b" style="left:572.2px;top:582px;font-size:11.3px;color:#333">Table - Historical</div>
<div class="t" style="left:572.2px;top:597.5px;font-size:10.4px;color:#444">Event open: 10/12/2022 8:00:00 PM - 10/12/2022 10:00:00 PM</div>
<div class="kb" style="left:1258.5px;top:583px"><i style="top:7px"></i><i style="top:10.5px"></i><i style="top:14px"></i></div>
<div class="a" style="left:564px;top:680.5px;width:725px;height:32px;background:#f7f7f7"></div>
<div class="a" style="left:564px;top:744.5px;width:725px;height:32px;background:#f7f7f7"></div>
<div class="a" style="left:564px;top:648px;width:726px;height:1px;background:#dfe0e6"></div>
<div class="a" style="left:713.5px;top:649px;width:1px;height:136px;background:#e6e6e6"></div>
<div class="a" style="left:813.5px;top:649px;width:1px;height:136px;background:#e6e6e6"></div>
<div class="a" style="left:933.5px;top:649px;width:1px;height:136px;background:#e6e6e6"></div>
<div class="a" style="left:1033.5px;top:649px;width:1px;height:136px;background:#e6e6e6"></div>
<div class="a" style="left:1183.5px;top:649px;width:1px;height:136px;background:#e6e6e6"></div>
<div class="t" style="left:574.6px;top:627px;font-size:13.6px;color:#333">Start date</div>
<div class="t" style="left:725.3px;top:627px;font-size:13.6px;color:#333">Duration</div>
<div class="t" style="left:825.2px;top:627px;font-size:13.6px;color:#333">Current state</div>
<div class="t" style="left:945.2px;top:627px;font-size:13.6px;color:#333">Type</div>
<div class="t" style="left:1045.3px;top:627px;font-size:13.6px;color:#333">Component</div>
<div class="t" style="left:1195.6px;top:627px;font-size:13.6px;color:#333">Description</div>
<div class="t" style="left:574.6px;top:658.3px;font-size:14.5px;color:#333">10/12/2022 9:42:...</div>
<div class="t r" style="right:569px;top:658.5999999999999px;font-size:14px;color:#333">19m 00s</div>
<svg class="a" style="left:786.5px;top:658.3px" width="16" height="16" viewBox="0 0 16 16"><circle cx="8" cy="8" r="6.2" fill="none" stroke="#333" stroke-width="1.4"/><path d="M8 4.2 V8.2 L10.6 10.3" fill="none" stroke="#333" stroke-width="1.4"/></svg>
<div class="t" style="left:825.2px;top:658.8px;font-size:13.6px;color:#333">Ended</div>
<svg class="a" style="left:944px;top:661.3px" width="20" height="10" viewBox="0 0 20 10"><circle cx="3.5" cy="5" r="2.3" fill="none" stroke="#7b3cf0" stroke-width="1.3"/><circle cx="15.5" cy="5" r="2.3" fill="none" stroke="#7b3cf0" stroke-width="1.3"/><line x1="5.8" y1="5" x2="13.2" y2="5" stroke="#7b3cf0" stroke-width="1.5"/></svg>
<div class="t" style="left:972.4px;top:658.5999999999999px;font-size:14px;color:#333">Stirring</div>
<div class="t" style="left:1045.3px;top:658.9px;font-size:13.5px;color:#333">BA:ACTIVE.1</div>
<div class="t" style="left:574.6px;top:690.3px;font-size:14.5px;color:#333">10/12/2022 9:36:...</div>
<div class="t r" style="right:569px;top:690.5999999999999px;font-size:14px;color:#333">5m 00s</div>
<svg class="a" style="left:786.5px;top:690.3px" width="16" height="16" viewBox="0 0 16 16"><circle cx="8" cy="8" r="6.2" fill="none" stroke="#333" stroke-width="1.4"/><path d="M8 4.2 V8.2 L10.6 10.3" fill="none" stroke="#333" stroke-width="1.4"/></svg>
<div class="t" style="left:825.2px;top:690.8px;font-size:13.6px;color:#333">Ended</div>
<svg class="a" style="left:944px;top:693.3px" width="20" height="10" viewBox="0 0 20 10"><circle cx="3.5" cy="5" r="2.3" fill="none" stroke="#e04040" stroke-width="1.3"/><circle cx="15.5" cy="5" r="2.3" fill="none" stroke="#e04040" stroke-width="1.3"/><line x1="5.8" y1="5" x2="13.2" y2="5" stroke="#e04040" stroke-width="1.5"/></svg>
<div class="t" style="left:972.4px;top:690.5999999999999px;font-size:14px;color:#333">Heating</div>
<div class="t" style="left:1045.3px;top:690.9px;font-size:13.5px;color:#333">BA:ACTIVE.1</div>
<div class="t" style="left:574.6px;top:722.3px;font-size:14.5px;color:#333">10/12/2022 9:17:...</div>
<div class="t r" style="right:569px;top:722.5999999999999px;font-size:14px;color:#333">9m 47s</div>
<svg class="a" style="left:786.5px;top:722.3px" width="16" height="16" viewBox="0 0 16 16"><circle cx="8" cy="8" r="6.2" fill="none" stroke="#333" stroke-width="1.4"/><path d="M8 4.2 V8.2 L10.6 10.3" fill="none" stroke="#333" stroke-width="1.4"/></svg>
<div class="t" style="left:825.2px;top:722.8px;font-size:13.6px;color:#333">Ended</div>
<svg class="a" style="left:944px;top:723.3px" width="20" height="14" viewBox="0 0 20 14"><path d="M1.5 3 L6 7.5 L8.5 5 L14 10.5" fill="none" stroke="#8a1cf0" stroke-width="2"/><path d="M9.5 11.8 H15.8 V5.5" fill="none" stroke="#8a1cf0" stroke-width="2"/></svg>
<div class="t" style="left:972.4px;top:722.5999999999999px;font-size:14px;color:#333">Loss: ...</div>
<div class="t" style="left:1045.3px;top:722.9px;font-size:13.5px;color:#333">Xbone S</div>
<div class="t" style="left:574.6px;top:754.3px;font-size:14.5px;color:#333">10/12/2022 9:16:...</div>
<div class="t r" style="right:569px;top:754.5999999999999px;font-size:14px;color:#333">9m 00s</div>
<svg class="a" style="left:786.5px;top:754.3px" width="16" height="16" viewBox="0 0 16 16"><circle cx="8" cy="8" r="6.2" fill="none" stroke="#333" stroke-width="1.4"/><path d="M8 4.2 V8.2 L10.6 10.3" fill="none" stroke="#333" stroke-width="1.4"/></svg>
<div class="t" style="left:825.2px;top:754.8px;font-size:13.6px;color:#333">Ended</div>
<svg class="a" style="left:944px;top:755.3px" width="20" height="14" viewBox="0 0 20 14"><path d="M1.5 3 L6 7.5 L8.5 5 L14 10.5" fill="none" stroke="#8a1cf0" stroke-width="2"/><path d="M9.5 11.8 H15.8 V5.5" fill="none" stroke="#8a1cf0" stroke-width="2"/></svg>
<div class="t" style="left:972.4px;top:754.5999999999999px;font-size:14px;color:#333">Loss: ...</div>
<div class="t" style="left:1045.3px;top:754.9px;font-size:13.5px;color:#333">BA:ACTIVE.1</div>
<div class="a" style="left:567px;top:777.5px;width:631px;height:4px;background:#c2c2c2;border-radius:2px"></div>
<div class="a" style="left:1282.5px;top:653px;width:3px;height:13px;background:#c2c2c2"></div>

<!-- Dashed tiles + labels -->
<svg class="a" style="left:0;top:0" width="1350" height="870" viewBox="0 0 1350 870"><g fill="none" stroke="#7000ff" stroke-width="2.2"><line x1="405" y1="100" x2="1297" y2="100" stroke-dasharray="12.0 4.000"/><line x1="1296" y1="99" x2="1296" y2="210" stroke-dasharray="12.0 4.500"/><line x1="1297" y1="209" x2="405" y2="209" stroke-dasharray="12.0 4.000"/><line x1="406" y1="210" x2="406" y2="99" stroke-dasharray="12.0 4.500"/><line x1="405" y1="483" x2="564" y2="483" stroke-dasharray="12.0 4.333"/><line x1="563" y1="482" x2="563" y2="581" stroke-dasharray="12.0 5.400"/><line x1="564" y1="580" x2="405" y2="580" stroke-dasharray="12.0 4.333"/><line x1="406" y1="581" x2="406" y2="482" stroke-dasharray="12.0 5.400"/><line x1="564" y1="483" x2="1297" y2="483" stroke-dasharray="12.0 4.022"/><line x1="1296" y1="482" x2="1296" y2="581" stroke-dasharray="12.0 5.400"/><line x1="1297" y1="580" x2="564" y2="580" stroke-dasharray="12.0 4.022"/><line x1="565" y1="581" x2="565" y2="482" stroke-dasharray="12.0 5.400"/></g></svg>
<div class="lbl" style="left:392px;top:83px"><span>Text tile</span></div>
<div class="lbl" style="left:392px;top:456px"><span>Text tile</span></div>
<div class="lbl" style="left:549.5px;top:456px;width:114.5px"><span>Text tile</span></div>
</body></html>
